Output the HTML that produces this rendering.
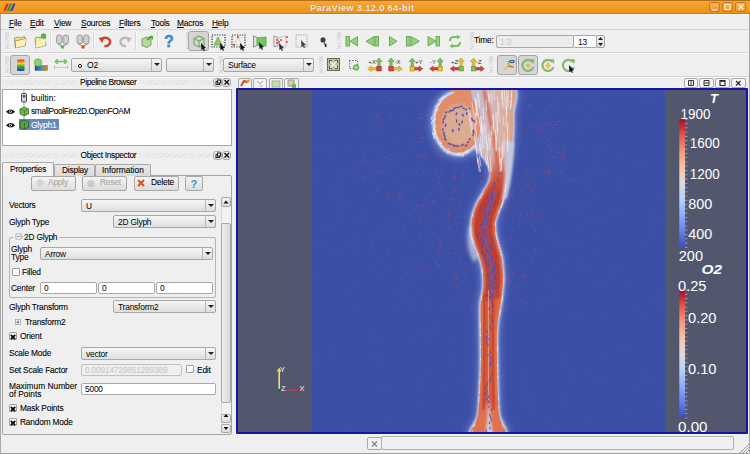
<!DOCTYPE html>
<html><head><meta charset="utf-8">
<style>
*{box-sizing:border-box;margin:0;padding:0}
html,body{width:750px;height:454px;overflow:hidden;background:#efefef;font-family:"Liberation Sans",sans-serif;font-size:8px;color:#000}
.t{-webkit-text-stroke:0.08px currentColor}
.a{position:absolute}
.t{position:absolute;white-space:nowrap;line-height:9px;font-size:8.4px;letter-spacing:-0.2px}
#title{left:0;top:0;width:750px;height:14px;background:linear-gradient(#f6a73a,#f29a24 60%,#ee921c);border-top:1px solid #b86e18;border-bottom:1px solid #c97a1c}
.tb{position:absolute;top:2px;width:11px;height:10px;border:1px solid #c8781c;border-radius:2px;background:linear-gradient(#f8b458,#f09a2a)}
.hline{position:absolute;left:1px;width:748px;height:1px;background:#d4d4d4}
.wline{position:absolute;left:1px;width:748px;height:1px;background:#fafafa}
.combo{position:absolute;height:13px;border:1px solid #a8a8a8;border-radius:2px;background:linear-gradient(#f6f6f6,#dedede)}
.combo .arr{position:absolute;right:0;top:0;bottom:0;width:10px;border-left:1px solid #b4b4b4}
.combo .arr:after{content:"";position:absolute;left:2px;top:4px;border-left:3px solid transparent;border-right:3px solid transparent;border-top:3px solid #222}
.combo .v{position:absolute;left:4px;top:1px;line-height:10px;font-size:8.4px;letter-spacing:-0.2px}
.field{position:absolute;height:12px;border:1px solid #a8a8a8;border-radius:2px;background:#fff}
.field .v{position:absolute;left:3px;top:0px;line-height:10px;font-size:8.4px;letter-spacing:-0.2px}
.btn{position:absolute;border:1px solid #a8a8a8;border-radius:2px;background:linear-gradient(#f4f4f4,#dcdcdc)}
.hdr{position:absolute;height:5px;background:repeating-linear-gradient(135deg,#e0e0e0 0 1px,transparent 1px 2.5px)}
.cb{position:absolute;width:8px;height:8px;border:1px solid #a0a0a0;border-radius:1px;background:#f8f8f8}
.x:before,.x:after{content:"";position:absolute;left:0px;top:2.6px;width:6px;height:1.8px;background:#111;transform:rotate(45deg)}.x:after{transform:rotate(-45deg)}
.hdl{position:absolute;width:4px;background:repeating-linear-gradient(135deg,#d4d4d4 0 1px,transparent 1px 2px)}
.sep{position:absolute;width:1px;height:18px;background:#d8d8d8;box-shadow:1px 0 #fafafa}
.prs{position:absolute;border:1px solid #a4a4a4;border-radius:3px;background:#d6d6d6}
.leg{position:absolute;color:#fff;font-size:13.5px;line-height:14px;white-space:nowrap}
</style></head><body>

<!-- window frame -->
<div class="a" style="left:0;top:0;width:750px;height:454px;border:1px solid #a8a8a8;border-top:none"></div>

<!-- title bar -->
<div id="title" class="a"></div>
<div class="t" style="left:310px;top:2.5px;font-weight:bold;font-size:9.4px;color:#f6ead2;letter-spacing:0.3px;text-shadow:0 0 1px rgba(140,70,0,.6)">ParaView 3.12.0 64-bit</div>
<div class="tb" style="left:709px"></div>
<div class="tb" style="left:722px"></div>
<div class="tb" style="left:735px"></div>

<!-- menu bar -->
<div class="wline" style="top:14px"></div>
<div class="hline" style="top:29px"></div>
<div class="t" style="left:9px;top:19px"><u style="text-decoration-thickness:1px;text-underline-offset:1px">F</u>ile</div>
<div class="t" style="left:30px;top:19px"><u style="text-decoration-thickness:1px;text-underline-offset:1px">E</u>dit</div>
<div class="t" style="left:54px;top:19px"><u style="text-decoration-thickness:1px;text-underline-offset:1px">V</u>iew</div>
<div class="t" style="left:81px;top:19px"><u style="text-decoration-thickness:1px;text-underline-offset:1px">S</u>ources</div>
<div class="t" style="left:119px;top:19px"><u style="text-decoration-thickness:1px;text-underline-offset:1px">F</u>ilters</div>
<div class="t" style="left:151px;top:19px"><u style="text-decoration-thickness:1px;text-underline-offset:1px">T</u>ools</div>
<div class="t" style="left:177px;top:19px"><u style="text-decoration-thickness:1px;text-underline-offset:1px">M</u>acros</div>
<div class="t" style="left:212px;top:19px"><u style="text-decoration-thickness:1px;text-underline-offset:1px">H</u>elp</div>

<!-- toolbar 1 -->
<div class="hline" style="top:52px"></div>
<div class="wline" style="top:53px"></div>
<div class="hline" style="top:76px"></div>
<div class="wline" style="top:77px"></div>


<!-- toolbar handles -->
<div class="hdl" style="left:5px;top:32px;height:17px"></div>
<div class="hdl" style="left:186px;top:32px;height:17px"></div>
<div class="hdl" style="left:337px;top:32px;height:17px"></div>
<div class="hdl" style="left:470px;top:32px;height:17px"></div>
<div class="hdl" style="left:5px;top:56px;height:17px"></div>
<div class="hdl" style="left:219px;top:56px;height:17px"></div>
<div class="hdl" style="left:319px;top:56px;height:17px"></div>
<div class="hdl" style="left:489px;top:56px;height:17px"></div>
<div class="sep" style="left:50px;top:32px"></div>
<div class="sep" style="left:93px;top:32px"></div>
<div class="sep" style="left:135px;top:32px"></div>
<div class="sep" style="left:157px;top:32px"></div>
<!-- pressed buttons -->
<div class="prs" style="left:188px;top:31px;width:21px;height:20px"></div>
<div class="prs" style="left:10px;top:55px;width:20px;height:20px"></div>
<div class="prs" style="left:497px;top:55px;width:20px;height:20px"></div>
<div class="prs" style="left:518px;top:55px;width:20px;height:20px"></div>

<!-- toolbar1 icons -->
<svg class="a" style="left:0;top:28px" width="750" height="24" viewBox="0 28 750 24">
 <!-- folders -->
 <g stroke="#8a8a60" stroke-width="0.8" fill="#f4e39a">
  <path d="M14.5 38 l4 -1 l1 1 l5 -1.5 l1 9 l-10 2.5z"/>
  <path d="M15 41 l11 -2.5 l-1 7 l-9.5 2.2z" fill="#f8ec b0"/>
  <path d="M35 38 l4 -1 l1 1 l5 -1.5 l1 9 l-10 2.5z"/>
 </g>
 <path d="M16 41.5 l10 -2.5 l-1 6.5 l-9 2.2z" fill="#fbf0b8"/>
 <path d="M36 41.5 l10 -2.5 l-1 6.5 l-9 2.2z" fill="#fbf0b8"/>
 <circle cx="43.5" cy="36" r="2.3" fill="#58c040" stroke="#2e8a28" stroke-width="0.6"/>
 <!-- servers -->
 <g fill="#cfcfcf" stroke="#8c8c8c" stroke-width="0.8">
  <rect x="56.5" y="35" width="5.5" height="9" rx="2.5"/><rect x="63" y="35" width="5.5" height="9" rx="2.5"/>
  <rect x="77" y="35" width="5.5" height="9" rx="2.5"/><rect x="83.5" y="35" width="5.5" height="9" rx="2.5"/>
 </g>
 <path d="M58 44 l4 2 M67 44 l-4 2 M78.5 44 l4 2 M87.5 44 l-4 2" stroke="#888" stroke-width="1"/>
 <circle cx="62.5" cy="47" r="1.8" fill="#50c040"/>
 <circle cx="83" cy="47" r="1.8" fill="#e04a20"/>
 <!-- undo / redo -->
 <path d="M101.5 40 a4.5 4.2 0 1 1 3 6" fill="none" stroke="#d83a22" stroke-width="2.4"/>
 <path d="M98.5 38 l5.5 -1 l-1.5 6z" fill="#d83a22"/>
 <path d="M129 40 a4.5 4.2 0 1 0 -3 6" fill="none" stroke="#b8b8b8" stroke-width="2.4"/>
 <path d="M132 38 l-5.5 -1 l1.5 6z" fill="#b8b8b8"/>
 <!-- green macro icon -->
 <path d="M142 39 l5 -2 l4 2 v6 l-4 2.5 l-5 -2z" fill="#b8d8a0" stroke="#6a9a50" stroke-width="0.9"/>
 <path d="M147 40 l5 -4" stroke="#48b030" stroke-width="2"/>
 <path d="M149 36 h4 v4z" fill="#48b030"/>
 <!-- help -->
 <text x="164" y="47" font-family="Liberation Sans" font-weight="bold" font-size="16" fill="#3a90d4" stroke="#2a6aa8" stroke-width="0.3">?</text>
 <!-- select cube (in pressed btn) -->
 <path d="M194 38.5 l5 -2.5 l5 2.5 v6 l-5 2.5 l-5 -2.5z M194 38.5 l5 2.5 l5 -2.5 M199 41 v6" fill="none" stroke="#7aa860" stroke-width="1.2"/>
 <path d="M201 43 l5 5 l-2 0.5 l1 2 l-1 .5 l-1 -2 l-1.5 1.2z" fill="#111"/>
 <!-- dotted select tri -->
 <rect x="212" y="35" width="13" height="12" fill="none" stroke="#333" stroke-width="1.2" stroke-dasharray="1.2 1.3"/>
 <path d="M214 45 l4 -8 l4 8z" fill="#8ccc6a" stroke="#5a9a40" stroke-width="0.7"/>
 <path d="M220 43 l5 5 l-2 0.5 l1 2 l-1 .5 l-1 -2 l-1.5 1.2z" fill="#111"/>
 <rect x="232" y="35" width="13" height="12" fill="none" stroke="#333" stroke-width="1.2" stroke-dasharray="1.2 1.3"/>
 <path d="M234 45 l4 -8 l4 8z" fill="none" stroke="#e0b8b0" stroke-width="0.7"/>
 <circle cx="238" cy="37" r="1" fill="#e02020"/><circle cx="234" cy="45" r="1" fill="#e02020"/>
 <path d="M240 43 l5 5 l-2 0.5 l1 2 l-1 .5 l-1 -2 l-1.5 1.2z" fill="#111"/>
 <!-- frustums -->
 <path d="M253.5 36 l4 1.5 v8 l-4 1.5z" fill="#d8e8d0" stroke="#777" stroke-width="0.8"/>
 <path d="M257 38 l9 -1 v9 l-9 -1z" fill="#70c860" stroke="#50a040" stroke-width="0.8"/>
 <path d="M259 42 l5 5 l-2 0.5 l1 2 l-1 .5 l-1 -2 l-1.5 1.2z" fill="#222"/>
 <path d="M274 36 l4 1.5 v8 l-4 1.5z" fill="#eee" stroke="#888" stroke-width="0.8"/>
 <path d="M278 38 l8 -2 v11 l-8 -2z" fill="#eee" stroke="#aaa" stroke-width="0.6"/>
 <g fill="#e03020"><circle cx="277" cy="40" r="0.9"/><circle cx="279" cy="42" r="0.9"/><circle cx="277" cy="43" r="0.9"/><circle cx="287" cy="37" r="0.9"/><circle cx="287" cy="42" r="0.9"/><circle cx="281" cy="40" r="0.9"/></g>
 <path d="M279 43 l5 5 l-2 0.5 l1 2 l-1 .5 l-1 -2 l-1.5 1.2z" fill="#333"/>
 <rect x="296" y="35" width="11" height="12" fill="none" stroke="#999" stroke-width="1" stroke-dasharray="1.2 1.2"/>
 <path d="M301 40 l5 5 l-2 0.5 l1 2 l-1 .5 l-1 -2 l-1.5 1.2z" fill="#444"/>
 <!-- star cursor -->
 <path d="M323 37 v6 M320 40 h6 M321 38 l4 4 M325 38 l-4 4" stroke="#333" stroke-width="1.1"/>
 <path d="M324 42 l3 3 l-1 1 l1 1 h-2z" fill="#222"/>
 <!-- VCR -->
 <g fill="#90d47a" stroke="#5e9e48" stroke-width="0.8">
  <rect x="346" y="36.5" width="3.5" height="9.5"/><path d="M357.5 36.5 v9.5 l-7.5 -4.75z"/>
  <path d="M366 41.25 l8 -4.75 v9.5z"/><rect x="375" y="36.5" width="3.5" height="9.5"/>
  <path d="M389.5 36.5 l7.5 4.75 l-7.5 4.75z"/>
  <rect x="406.5" y="36.5" width="3.5" height="9.5"/><path d="M411 36.5 l8.5 4.75 l-8.5 4.75z"/>
  <path d="M428 36.5 l8 4.75 l-8 4.75z"/><rect x="436" y="36.5" width="3.5" height="9.5"/>
 </g>
 <!-- loop -->
 <path d="M450 41 q0 -4 4 -4 h4" fill="none" stroke="#78c060" stroke-width="2.2"/>
 <path d="M457 34.5 l3.5 2.5 l-3.5 2.5z" fill="#78c060"/>
 <path d="M460 42 q0 4 -4 4 h-4" fill="none" stroke="#78c060" stroke-width="2.2"/>
 <path d="M453 43.5 l-3.5 2.5 l3.5 2.5z" fill="#78c060"/>
</svg>
<div class="t" style="left:474px;top:36px">Time:</div>
<div class="field" style="left:496px;top:35px;width:78px;height:13px;background:#ececec"><div class="v" style="color:#c8c8c8;top:1px">1 3</div></div>
<div class="field" style="left:573px;top:35px;width:24px;height:13px"><div class="v" style="top:1px;left:4px">13</div></div>
<div class="btn" style="left:596px;top:35px;width:9px;height:13px"></div>
<svg class="a" style="left:596px;top:35px" width="9" height="13"><path d="M2 5 l2.5 -3 l2.5 3z M2 8 l2.5 3 l2.5 -3z" fill="#222"/></svg>

<!-- toolbar2 icons -->
<svg class="a" style="left:0;top:52px" width="750" height="25" viewBox="0 52 750 25">
 <defs>
  <linearGradient id="rb" x1="0" y1="0" x2="0" y2="1"><stop offset="0" stop-color="#e83020"/><stop offset=".35" stop-color="#f0d020"/><stop offset=".6" stop-color="#30b030"/><stop offset="1" stop-color="#2040c0"/></linearGradient>
  <linearGradient id="bo" x1="0" y1="0" x2="1" y2="0"><stop offset="0" stop-color="#2040c0"/><stop offset=".5" stop-color="#30a0a0"/><stop offset="1" stop-color="#f08020"/></linearGradient>
 </defs>
 <rect x="17" y="59.5" width="7.5" height="11.5" rx="1" fill="url(#rb)"/>
 <rect x="35" y="65.5" width="12.5" height="5" fill="url(#bo)" stroke="#555" stroke-width="0.4"/>
 <circle cx="38" cy="62.5" r="3.8" fill="#90d070" stroke="#5a9a40" stroke-width="0.6"/>
 <path d="M55 61.5 h12 M55 61.5 l3 -2.2 M55 61.5 l3 2.2 M67 61.5 l-3 -2.2 M67 61.5 l-3 2.2" stroke="#80c060" stroke-width="1.6" fill="none"/>
 <path d="M54.5 67.5 h13 M54.5 65.5 v4 M67.5 65.5 v4" stroke="#888" stroke-width="0.7" stroke-dasharray="1 1" fill="none"/>
 <!-- reset camera -->
 <rect x="327.5" y="58.5" width="12" height="12" fill="#b8c0a0" stroke="#666" stroke-width="1"/>
 <path d="M329.5 60.5 l8 8 M337.5 60.5 l-8 8" stroke="#f4f4f0" stroke-width="1.3"/>
 <path d="M329 60 h3 v1 h-2 v2 h-1z M338 60 h-3 v1 h2 v2 h1z M329 69 h3 v-1 h-2 v-2 h-1z M338 69 h-3 v-1 h2 v-2 h1z" fill="#4a6a30"/>
 <!-- select center -->
 <path d="M349.5 60.5 h8 v8 h-8z" fill="none" stroke="#555" stroke-width="1" stroke-dasharray="1.2 1.6"/>
 <circle cx="356" cy="67.5" r="2.8" fill="#70d060" stroke="#40a030" stroke-width="0.6"/>
 <circle cx="356" cy="67.5" r="0.8" fill="#fff"/>
</svg>

<svg class="a" style="left:0;top:52px" width="750" height="25" viewBox="0 52 750 25"><path d="M377.8 67 v-5.5 h-1.8 l3 -3.5 l3 3.5 h-1.8 v5.5z" fill="#80c060" stroke="#4a8a38" stroke-width="0.5"/><path d="M367.7 68.7 l3.5 -2.8 v1.6 h5.800000000000011 v2.4 h-5.800000000000011 v1.6z" fill="#f0c030" stroke="#a08020" stroke-width="0.5"/><rect x="376.8" y="66.5" width="4.5" height="4.5" fill="#e04030" stroke="#902820" stroke-width="0.5"/><text x="368.5" y="64.3" font-family="Liberation Sans" font-size="6" fill="#333">+X</text><path d="M389.8 67 v-5.5 h-1.8 l3 -3.5 l3 3.5 h-1.8 v5.5z" fill="#80c060" stroke="#4a8a38" stroke-width="0.5"/><path d="M402.3 68.7 l-3.5 -2.8 v1.6 h-5.800000000000011 v2.4 h5.800000000000011 v1.6z" fill="#f0c030" stroke="#a08020" stroke-width="0.5"/><rect x="388.8" y="66.5" width="4.5" height="4.5" fill="#e04030" stroke="#902820" stroke-width="0.5"/><text x="394.5" y="64.3" font-family="Liberation Sans" font-size="6" fill="#333">-X</text><path d="M411.0 67 v-5.5 h-1.8 l3 -3.5 l3 3.5 h-1.8 v5.5z" fill="#80c060" stroke="#4a8a38" stroke-width="0.5"/><path d="M422.7 68.7 l-3.5 -2.8 v1.6 h-5.199999999999989 v2.4 h5.199999999999989 v1.6z" fill="#e04030" stroke="#902820" stroke-width="0.5"/><rect x="410" y="66.5" width="4.5" height="4.5" fill="#f0c030" stroke="#a08020" stroke-width="0.5"/><text x="415" y="64.3" font-family="Liberation Sans" font-size="6" fill="#333">+Y</text><path d="M439.0 67 v-5.5 h-1.8 l3 -3.5 l3 3.5 h-1.8 v5.5z" fill="#80c060" stroke="#4a8a38" stroke-width="0.5"/><path d="M429.7 68.7 l3.5 -2.8 v1.6 h5.0 v2.4 h-5.0 v1.6z" fill="#e04030" stroke="#902820" stroke-width="0.5"/><rect x="438" y="66.5" width="4.5" height="4.5" fill="#f0c030" stroke="#a08020" stroke-width="0.5"/><text x="430" y="64.3" font-family="Liberation Sans" font-size="6" fill="#333">-Y</text><path d="M460.0 67 v-5.5 h-1.8 l3 -3.5 l3 3.5 h-1.8 v5.5z" fill="#f0c030" stroke="#a08020" stroke-width="0.5"/><path d="M450.3 68.7 l3.5 -2.8 v1.6 h5.399999999999977 v2.4 h-5.399999999999977 v1.6z" fill="#e04030" stroke="#902820" stroke-width="0.5"/><rect x="459" y="66.5" width="4.5" height="4.5" fill="#80c060" stroke="#4a8a38" stroke-width="0.5"/><text x="451" y="64.3" font-family="Liberation Sans" font-size="6" fill="#333">+Z</text><path d="M472.3 67 v-5.5 h-1.8 l3 -3.5 l3 3.5 h-1.8 v5.5z" fill="#f0c030" stroke="#a08020" stroke-width="0.5"/><path d="M484.3 68.7 l-3.5 -2.8 v1.6 h-5.300000000000011 v2.4 h5.300000000000011 v1.6z" fill="#e04030" stroke="#902820" stroke-width="0.5"/><rect x="471.3" y="66.5" width="4.5" height="4.5" fill="#80c060" stroke="#4a8a38" stroke-width="0.5"/><text x="476" y="64.3" font-family="Liberation Sans" font-size="6" fill="#333">-Z</text>
 <path d="M508 62 l3 -2 l3 2" fill="none" stroke="#444" stroke-width="0"/>
 <path d="M503.5 70 l5 -4" stroke="#f0c030" stroke-width="1.6"/>
 <path d="M508.5 66 l5 1" stroke="#e06030" stroke-width="1.6"/>
 <path d="M508.5 66 v-5" stroke="#80c060" stroke-width="1.6"/>
 <ellipse cx="512" cy="61.5" rx="2.8" ry="1.8" fill="#3a5aa0"/><circle cx="512" cy="61.5" r="0.8" fill="#fff"/>
<path d="M532.5 62.0 A5.6 5.6 0 1 0 533.4 67.0" fill="none" stroke="#88b870" stroke-width="2.2"/><path d="M530 59.0 l4.5 0.5 l-0.8 4.5z" fill="#88b870"/><circle cx="528" cy="65.5" r="1.6" fill="#e8d040" stroke="#a09020" stroke-width="0.4"/><path d="M552.5 62.0 A5.6 5.6 0 1 0 553.4 67.0" fill="none" stroke="#88b870" stroke-width="2.2"/><path d="M550 59.0 l4.5 0.5 l-0.8 4.5z" fill="#88b870"/><path d="M548 62.5 l2.5 3 l-2.5 3 l-2.5 -3z" fill="#f0d040" stroke="#c08020" stroke-width="0.4"/><path d="M573.0 62.0 A5.6 5.6 0 1 0 573.9 67.0" fill="none" stroke="#88b870" stroke-width="2.2"/><path d="M570.5 59.0 l4.5 0.5 l-0.8 4.5z" fill="#88b870"/><path d="M569 65 l5 5 l-2 0.5 l1 2 l-1 .5 l-1 -2 l-1.5 1.2z" fill="#111"/></svg>

<div class="combo" style="left:71px;top:58px;width:91px;height:14px"><div class="v" style="left:15px;top:1px;font-size:8.5px">O2</div><div class="arr"></div></div>
<svg class="a" style="left:77px;top:63px" width="6" height="6"><circle cx="3" cy="3" r="1.6" fill="none" stroke="#222" stroke-width="1"/></svg>
<div class="combo" style="left:166px;top:58px;width:48px;height:14px"><div class="arr"></div></div>
<div class="combo" style="left:223px;top:58px;width:91px;height:14px"><div class="v" style="top:1px;font-size:8.5px">Surface</div><div class="arr"></div></div>

<!-- docks -->
<div class="t" style="left:80px;top:78px;letter-spacing:-0.40px">Pipeline Browser</div>
<div class="a" style="left:2px;top:89px;width:230px;height:57px;background:#fff;border:1px solid #a8a8a8"></div>
<div class="t" style="left:31px;top:94px;letter-spacing:0.10px">builtin:</div>
<div class="t" style="left:31px;top:107px;letter-spacing:-0.39px">smallPoolFire2D.OpenFOAM</div>
<div class="a" style="left:19px;top:119px;width:40px;height:11px;background:#6288bf"></div>
<div class="t" style="left:31px;top:121px;color:#fff">Glyph1</div>

<div class="t" style="left:80.5px;top:151px;letter-spacing:-0.33px">Object Inspector</div>


<!-- object inspector -->
<div class="a" style="left:2px;top:175px;width:230px;height:260px;border:1px solid #a4a4a4;border-radius:2px;background:#efefef"></div>
<!-- tabs -->
<div class="a" style="left:54px;top:164px;width:41px;height:12px;border:1px solid #a8a8a8;border-bottom:none;border-radius:2px 2px 0 0;background:linear-gradient(#e8e8e8,#dadada)"></div>
<div class="a" style="left:95px;top:164px;width:56px;height:12px;border:1px solid #a8a8a8;border-bottom:none;border-radius:2px 2px 0 0;background:linear-gradient(#e8e8e8,#dadada)"></div>
<div class="a" style="left:2px;top:162px;width:52px;height:14px;border:1px solid #a8a8a8;border-bottom:none;border-radius:2px 2px 0 0;background:#f2f2f2"></div>
<div class="t" style="left:10px;top:165px">Properties</div>
<div class="t" style="left:62px;top:166px">Display</div>
<div class="t" style="left:102px;top:166px;letter-spacing:0.00px">Information</div>
<!-- buttons -->
<div class="btn" style="left:31px;top:176px;width:45px;height:15px"></div>
<div class="t" style="left:48px;top:178px;color:#a8a8a8">Apply</div>
<div class="btn" style="left:82px;top:176px;width:45px;height:15px"></div>
<div class="t" style="left:100px;top:178px;color:#a8a8a8">Reset</div>
<div class="btn" style="left:134px;top:176px;width:45px;height:15px"></div>
<div class="t" style="left:151px;top:178px">Delete</div>
<div class="btn" style="left:185px;top:176px;width:18px;height:15px"></div>
<!-- rows -->
<div class="t" style="left:9px;top:201px">Vectors</div>
<div class="combo" style="left:81px;top:199px;width:135px"><div class="v">U</div><div class="arr"></div></div>
<div class="t" style="left:9px;top:218px">Glyph Type</div>
<div class="combo" style="left:113px;top:215px;width:103px"><div class="v">2D Glyph</div><div class="arr"></div></div>
<!-- group -->
<div class="a" style="left:9px;top:237px;width:207px;height:61px;border:1px solid #b4b4b4;border-radius:2px"></div>
<div class="a" style="left:13px;top:232px;width:46px;height:10px;background:#efefef"></div>
<div class="t" style="left:24px;top:233px">2D Glyph</div>
<div class="t" style="left:11px;top:245px;line-height:8px">Glyph<br>Type</div>
<div class="combo" style="left:40px;top:247px;width:173px"><div class="v">Arrow</div><div class="arr"></div></div>
<div class="cb" style="left:12px;top:268px"></div>
<div class="t" style="left:22px;top:268px">Filled</div>
<div class="t" style="left:11px;top:284px">Center</div>
<div class="field" style="left:40px;top:282px;width:57px"><div class="v">0</div></div>
<div class="field" style="left:98px;top:282px;width:57px"><div class="v">0</div></div>
<div class="field" style="left:156px;top:282px;width:57px"><div class="v">0</div></div>
<div class="t" style="left:9px;top:303px">Glyph Transform</div>
<div class="combo" style="left:113px;top:300px;width:103px"><div class="v">Transform2</div><div class="arr"></div></div>
<div class="t" style="left:25px;top:318px">Transform2</div>
<div class="cb x" style="left:9px;top:332px"></div>
<div class="t" style="left:20px;top:332px">Orient</div>
<div class="t" style="left:9px;top:349px">Scale Mode</div>
<div class="combo" style="left:81px;top:347px;width:135px"><div class="v">vector</div><div class="arr"></div></div>
<div class="t" style="left:9px;top:366px">Set Scale Factor</div>
<div class="field" style="left:81px;top:364px;width:101px;background:#efefef;border-color:#c0c0c0"><div class="v" style="color:#c4c4c4">0.00914729851289389</div></div>
<div class="cb" style="left:186px;top:365px"></div>
<div class="t" style="left:197px;top:366px">Edit</div>
<div class="t" style="left:9px;top:382px;line-height:8px;letter-spacing:-0.02px">Maximum Number<br>of Points</div>
<div class="field" style="left:81px;top:383px;width:135px"><div class="v">5000</div></div>
<div class="cb x" style="left:9px;top:404px"></div>
<div class="t" style="left:20px;top:404px">Mask Points</div>
<div class="cb x" style="left:9px;top:418px"></div>
<div class="t" style="left:20px;top:418px">Random Mode</div>
<!-- scrollbar -->
<div class="a" style="left:221px;top:197px;width:10px;height:236px;background:#f2f2f2;border-left:1px solid #d8d8d8"></div>
<div class="btn" style="left:221px;top:197px;width:10px;height:10px"></div>
<div class="btn" style="left:221px;top:223px;width:10px;height:180px;background:linear-gradient(90deg,#f0f0f0,#d8d8d8)"></div>
<div class="btn" style="left:221px;top:414px;width:10px;height:9px"></div>
<div class="btn" style="left:221px;top:424px;width:10px;height:9px"></div>
<svg class="a" style="left:221px;top:197px" width="10" height="236"><path d="M2.5 6.5 l2.5 -3 l2.5 3z M2.5 220 l2.5 -3 l2.5 3z M2.5 230 l2.5 3 l2.5 -3z" fill="#111"/></svg>

<!-- title icon and buttons -->
<svg class="a" style="left:0;top:0" width="750" height="16">
 <path d="M3.5 11 l3.2 -7.5 h2.2 l-3.2 7.5z" fill="#e02818"/>
 <path d="M6.8 11 l3.2 -7.5 h2.2 l-3.2 7.5z" fill="#20a030"/>
 <path d="M10.1 11 l3.2 -7.5 h2.2 l-3.2 7.5z" fill="#2040d0"/>
 <path d="M712 10 h5" stroke="#fff4e0" stroke-width="1.2"/>
 <rect x="725" y="4.5" width="5" height="5" fill="none" stroke="#fff4e0" stroke-width="1"/>
 <path d="M738.5 4.5 l5 5 M743.5 4.5 l-5 5" stroke="#fff4e0" stroke-width="1.3"/>
</svg>
<!-- dock headers hatch -->
<div class="hdr" style="left:3px;top:80px;width:74px"></div>
<div class="hdr" style="left:141px;top:80px;width:71px"></div>
<div class="hdr" style="left:3px;top:153px;width:74px"></div>
<div class="hdr" style="left:139px;top:153px;width:73px"></div>
<div class="btn" style="left:213px;top:78px;width:9px;height:9px;border-radius:3px"></div>
<div class="btn" style="left:222px;top:78px;width:9px;height:9px;border-radius:3px"></div>
<div class="btn" style="left:213px;top:151px;width:9px;height:9px;border-radius:3px"></div>
<div class="btn" style="left:222px;top:151px;width:9px;height:9px;border-radius:3px"></div>
<svg class="a" style="left:0;top:0" width="240" height="440">
 <g fill="none" stroke="#222" stroke-width="1">
  <rect x="216" y="81.5" width="3.5" height="3"/><rect x="217.5" y="80" width="3" height="3" fill="#eee"/>
  <rect x="216" y="154.5" width="3.5" height="3"/><rect x="217.5" y="153" width="3" height="3" fill="#eee"/>
 </g>
 <path d="M224.5 80 l4.5 4.5 M229 80 l-4.5 4.5 M224.5 153 l4.5 4.5 M229 153 l-4.5 4.5" stroke="#111" stroke-width="1.4"/>
 <!-- pipeline icons -->
 <path d="M24 89.5 v4 M24 102 v5.5 M24 115 v4.5" stroke="#888" stroke-width="0.8"/>
 <rect x="21.5" y="93.5" width="5" height="8.5" rx="1" fill="#d8d8d8" stroke="#333" stroke-width="0.9"/>
 <rect x="22.8" y="95" width="2.5" height="2.5" fill="#555"/>
 <path d="M20 109 l4 -1.8 l4.5 1.8 v5 l-4.5 1.8 l-4 -1.8z" fill="#6cb84a" stroke="#3a6a28" stroke-width="0.8"/>
 <path d="M20 109 l4.5 1.8 l4 -1.8 M24.5 110.8 v5" stroke="#3a6a28" stroke-width="0.6" fill="none"/>
 <path d="M20 121.5 l4 -1.5 l4.5 1.5 v6 l-4.5 1.5 l-4 -1.5z" fill="#5aa040" stroke="#2e5a22" stroke-width="0.8"/>
 <path d="M24.5 123 v6" stroke="#2e5a22" stroke-width="0.7"/>
 <g fill="#111"><path d="M6 111.8 q4.5 -4.5 9 0 q-4.5 4.5 -9 0z"/><path d="M6 125.3 q4.5 -4.5 9 0 q-4.5 4.5 -9 0z"/></g>
 <circle cx="10.5" cy="111.8" r="1.3" fill="#fff"/><circle cx="10.5" cy="125.3" r="1.3" fill="#fff"/>
 <circle cx="10.5" cy="111.8" r="0.7" fill="#111"/><circle cx="10.5" cy="125.3" r="0.7" fill="#111"/>
 <!-- object inspector button icons -->
 <g opacity="0.45">
  <circle cx="40" cy="182.5" r="3.5" fill="#bbb"/>
  <circle cx="91" cy="183.5" r="3.8" fill="#aaa"/>
 </g>
 <path d="M138 180 l6 6 M144 180 l-6 6" stroke="#e05020" stroke-width="2"/>
 <text x="190.5" y="188" font-family="Liberation Sans" font-weight="bold" font-size="11" fill="#3a8ed0">?</text>
 <!-- group title box minus, transform plus -->
 <rect x="16" y="234" width="5" height="5" fill="#fff" stroke="#999" stroke-width="0.7"/>
 <path d="M17.2 236.5 h2.6" stroke="#555" stroke-width="0.7"/>
 <path d="M21 236.5 h2" stroke="#999" stroke-width="0.7"/>
 <rect x="15.5" y="319.5" width="5" height="5" fill="#fff" stroke="#999" stroke-width="0.7"/>
 <path d="M16.5 322 h3 M18 320.5 v3" stroke="#444" stroke-width="0.8"/>
</svg>
<!-- render view tabs -->
<div class="btn" style="left:238px;top:78px;width:14px;height:11px;border-radius:2px 2px 0 0;background:#f2f2f2"></div>
<div class="btn" style="left:253px;top:78px;width:14px;height:11px;border-radius:2px 2px 0 0;background:#f2f2f2"></div>
<div class="btn" style="left:269px;top:78px;width:14px;height:11px;border-radius:2px 2px 0 0;background:#f2f2f2"></div>
<div class="btn" style="left:284px;top:78px;width:15px;height:11px;border-radius:2px 2px 0 0;background:#f2f2f2"></div>
<div class="btn" style="left:684px;top:78px;width:14px;height:10px;background:#f6f6f6"></div>
<div class="btn" style="left:699px;top:78px;width:15px;height:10px;background:#f6f6f6"></div>
<div class="btn" style="left:715px;top:78px;width:15px;height:10px;background:#f6f6f6"></div>
<div class="btn" style="left:731px;top:78px;width:15px;height:10px;background:#f6f6f6"></div>
<svg class="a" style="left:230px;top:74px" width="520" height="16" viewBox="230 74 520 16">
 <path d="M241 86 l3 -5 l3 1 l2 -2" stroke="#d05020" stroke-width="2" fill="none"/><circle cx="248" cy="81" r="1.6" fill="#e8a040"/>
 <path d="M257 81 l3 3 l3 -3 M259 86 h4" stroke="#bbb" stroke-width="1.2" fill="none"/>
 <rect x="272" y="81" width="8" height="6" fill="#c8e0a8" stroke="#90a880" stroke-width="0.8"/>
 <rect x="288" y="80" width="6" height="6" fill="#d8d0b0" stroke="#889" stroke-width="0.8"/><circle cx="294" cy="86" r="2.3" fill="#60c040"/>
 <path d="M688.5 80.5 h5 v5 h-5z M691 80.5 v5" stroke="#222" stroke-width="0.9" fill="none"/>
 <path d="M704 80.5 h5 v5 h-5z M704 83 h5" stroke="#222" stroke-width="0.9" fill="none"/>
 <path d="M720 80.5 h5 v5 h-5z" stroke="#222" stroke-width="1.1" fill="none"/><path d="M720 81 h5" stroke="#222" stroke-width="1.5"/>
 <path d="M736 81 l4.5 4.5 M740.5 81 l-4.5 4.5" stroke="#222" stroke-width="1.1"/>
</svg>

<!-- render view -->
<div class="a" style="left:236px;top:88px;width:512px;height:346px;border:2px solid #1616a4;border-radius:1px;background:#52576e"></div>
<svg class="a" style="left:238px;top:90px" width="508" height="342" viewBox="238 90 508 342">
<defs>
<filter id="b4" x="-50%" y="-50%" width="200%" height="200%"><feGaussianBlur stdDeviation="3.5"/></filter>
<filter id="b2" x="-50%" y="-50%" width="200%" height="200%"><feGaussianBlur stdDeviation="2"/></filter>
<filter id="b1" x="-50%" y="-50%" width="200%" height="200%"><feGaussianBlur stdDeviation="1"/></filter>
<filter id="b06" x="-50%" y="-50%" width="200%" height="200%"><feGaussianBlur stdDeviation="0.6"/></filter>
<filter id="b04" x="-50%" y="-50%" width="200%" height="200%"><feGaussianBlur stdDeviation="0.35"/></filter>
<linearGradient id="plg" x1="0" y1="0" x2="1" y2="0"><stop offset="0" stop-color="#b4bcdc"/><stop offset=".45" stop-color="#ccbcc8"/><stop offset=".8" stop-color="#dcae9c"/><stop offset="1" stop-color="#d8a088"/></linearGradient>
</defs>
<rect x="238" y="90" width="508" height="342" fill="#52576e"/>
<rect x="312" y="90" width="353" height="342" fill="#3c4fa6"/>
<path d="M424.0 169.6l-0.9 3.2M408.2 121.5l-2.7 -1.9M355.2 175.3l-2.0 2.7M538.7 131.4l2.3 -0.6M583.7 203.2l2.0 0.2M517.4 174.1l2.2 1.6M424.5 138.0l-3.5 -0.4M373.0 244.3l-0.9 2.5M532.4 258.9l0.1 3.8M513.1 196.5l1.9 0.9M396.9 139.6l-2.7 0.1M593.2 150.4l1.8 1.1M424.7 156.7l-2.0 0.2M426.4 212.1l0.0 3.3M445.1 231.7l0.4 2.2M567.6 179.7l1.6 2.1M553.1 98.0l3.6 -0.3M380.0 115.8l-2.6 1.3M477.0 266.2l-0.1 1.8M382.1 147.8l-2.4 2.7M533.7 228.7l2.0 3.2M512.8 272.2l-1.0 2.9M403.6 227.7l-0.5 2.5M524.7 130.9l2.2 0.1M532.1 213.4l1.1 2.7M534.3 218.1l2.0 1.4M462.1 179.2l0.0 3.1M412.7 140.3l-2.5 -0.0M441.6 214.8l-0.4 2.2M580.9 225.3l0.8 3.0M385.3 235.6l-1.8 0.7M421.6 130.8l-2.1 -0.5M378.4 165.5l-3.0 0.5M392.2 154.5l-2.4 2.3M481.3 180.0l-0.7 2.4M543.5 172.3l2.2 1.3M368.9 145.0l-3.1 1.6M407.0 272.7l-1.2 1.3M422.5 117.7l-3.2 -0.4M445.2 274.4l0.1 2.6M546.7 178.7l1.6 1.9M345.4 168.6l-1.8 1.9M541.1 127.9l3.4 0.2M437.0 261.1l-1.8 3.3M383.1 120.1l-3.2 -0.5M509.7 281.4l-0.9 3.7M399.1 193.2l-1.0 3.5M518.3 107.5l2.4 0.3M479.0 161.8l-1.0 3.5M562.0 158.4l3.1 0.1M523.3 188.2l0.7 1.9M411.4 277.3l-2.8 2.5M526.2 171.5l1.8 2.9M465.7 241.3l-0.7 1.8M590.3 172.4l1.9 0.3M451.1 192.7l0.4 1.8M394.2 177.6l-1.7 2.2M435.2 154.1l-1.0 2.0M388.8 250.1l-1.9 3.3M440.6 184.8l-0.2 2.3M407.7 214.1l-2.3 1.1M365.4 161.2l-2.6 0.2M415.9 208.6l-0.0 1.8M454.5 252.6l-0.7 2.2M511.4 180.5l2.3 1.4M459.0 185.3l-1.5 2.1M443.0 188.6l-1.0 2.1M401.0 201.8l-1.4 1.5M547.6 170.1l3.0 -0.2M444.3 196.5l-1.6 1.7M401.7 257.0l-0.5 1.8M409.6 168.9l-1.6 1.6M422.0 118.5l-3.8 -0.4M393.3 223.3l-2.6 2.3M551.4 151.9l2.5 -0.3M454.8 200.7l-1.5 1.6M560.4 152.1l3.2 1.8M426.5 154.0l-2.1 0.0M460.4 222.0l-0.6 2.9M485.4 171.1l0.5 3.6M485.3 173.7l-0.4 3.3M367.0 215.7l-0.7 2.4M533.8 186.1l1.2 1.8M526.9 212.8l-0.1 3.2M571.0 213.8l1.7 1.2M456.7 246.4l-1.5 2.0M559.6 171.5l3.5 0.8M401.8 234.2l-2.8 2.1M520.2 276.5l-0.3 2.0M440.9 218.6l-1.2 2.2M440.2 249.1l-1.3 2.7M387.1 217.0l-1.9 2.7M341.3 180.2l-2.4 -0.2M572.0 179.3l2.5 1.1M439.1 237.5l0.9 3.3M453.5 167.3l-0.5 2.4M482.9 169.8l0.5 1.7M454.4 188.6l1.0 3.6M434.8 147.4l-2.5 1.3M514.7 178.9l0.8 2.4M473.1 256.5l-0.6 1.9M506.5 204.6l-0.4 3.3M390.3 159.4l-2.0 0.6M402.5 191.0l-1.0 2.6M409.1 188.3l-2.5 2.5M584.5 179.8l1.4 2.1M459.6 256.2l-0.2 2.9M418.8 205.4l-3.3 1.7M366.3 177.7l-2.4 0.3M378.4 170.5l-2.6 2.0M589.9 220.3l2.3 2.3M391.8 117.9l-3.4 -1.4M512.4 191.5l0.0 2.7M529.9 216.8l1.0 2.2M534.5 248.2l1.3 2.4M598.3 194.5l1.0 1.6M422.4 154.8l-3.7 0.9M448.2 211.4l0.5 3.3M428.3 115.6l-2.9 -0.1M456.0 171.6l-1.5 1.4M556.4 239.9l2.0 2.2M561.1 243.6l1.8 2.0M409.5 213.1l-0.1 2.5M543.4 142.2l2.9 2.3M401.2 152.1l-2.2 2.6M571.9 181.4l1.4 1.3M392.0 167.3l-2.3 3.0M433.1 240.7l-2.3 2.8M550.3 149.9l1.9 1.2M441.1 169.3l-0.1 3.2M517.5 124.2l3.7 -0.7M557.2 151.6l2.8 1.5M426.5 250.0l-1.0 2.3M439.6 176.1l-0.5 1.8M477.7 265.0l-1.3 3.0M392.2 99.5l-3.3 0.8M530.5 188.5l1.1 3.3M537.2 129.4l2.2 1.5M549.3 165.3l2.1 1.2M363.0 160.2l-2.1 1.8M549.4 114.3l2.1 -1.0M365.6 146.9l-2.5 2.5M380.7 129.9l-2.1 -0.2M449.4 252.3l-0.6 2.1M519.1 224.6l-0.1 2.1M452.7 197.7l-0.6 3.1M534.9 250.3l1.1 2.0M415.2 246.0l-1.8 1.8M579.0 205.8l2.1 2.5M538.9 215.2l3.2 1.9M457.3 215.8l0.1 2.5M401.7 198.6l-3.3 1.6M419.6 219.9l-0.2 3.1M437.1 252.0l-0.0 2.6M427.8 156.7l-1.4 3.1M524.5 97.1l2.3 -0.8M547.6 145.4l2.8 0.4M467.2 249.3l0.8 3.3M546.8 231.6l2.3 1.5M437.0 173.5l-2.5 2.2M466.5 246.4l0.3 2.7M449.1 213.4l0.7 2.6M422.6 138.3l-2.5 -0.3M375.5 127.6l-2.2 -0.6M569.2 207.1l1.9 0.3M457.9 276.6l-0.4 2.4M439.7 242.0l0.6 1.9M430.4 230.7l-0.8 2.9M423.0 98.6l-3.2 -0.5M452.8 174.8l0.0 2.6M555.1 124.9l2.0 -0.3M390.1 194.3l-1.9 2.5M442.0 156.3l-3.2 0.9M417.3 170.8l-0.8 1.7M392.0 159.3l-2.3 1.8M420.1 140.6l-2.3 2.7M595.3 165.0l3.2 -0.7M512.9 229.9l0.8 1.7M385.5 97.4l-2.7 -2.2M427.0 220.2l-0.4 3.1M508.6 278.8l1.7 2.1M384.9 157.4l-2.0 0.7M414.7 217.9l-2.4 2.2M562.6 149.5l1.3 1.5M414.5 145.9l-2.4 1.1M523.9 183.4l2.4 2.4M410.2 101.9l-3.3 -1.2M549.0 173.1l1.8 1.0M519.1 122.9l2.6 -1.1M539.2 126.8l2.6 -1.3M424.6 269.5l-0.6 3.3M454.8 175.8l-0.7 3.1M355.3 166.9l-2.2 2.9M378.5 115.0l-3.0 -0.4M544.7 175.9l2.4 1.8M463.8 172.9l-1.3 3.3M425.3 198.0l-1.4 2.7M590.1 186.5l1.2 1.6M546.6 139.7l2.8 -1.0M477.1 161.5l0.1 3.5M366.1 177.5l-1.5 2.5M448.5 219.9l-0.1 2.1M546.6 171.5l3.4 1.6M470.7 183.8l-1.3 2.1M549.4 123.2l2.2 -1.0M377.6 189.0l-1.1 2.6M578.5 145.9l1.8 0.9M464.8 274.4l1.7 3.3M550.9 106.2l2.6 -2.1M481.2 188.7l0.4 2.4M551.9 127.4l2.6 0.4M563.7 148.1l2.0 2.2M449.3 225.7l1.0 2.6M371.9 182.2l-1.1 1.5M536.2 117.4l2.0 0.3M533.8 169.7l1.8 3.0M467.0 165.1l0.3 3.3M506.7 200.4l0.4 3.3M524.9 275.3l0.8 2.7M420.3 167.4l-1.9 1.7M525.9 179.3l2.7 1.2M439.2 182.1l-0.1 2.2M432.9 200.3l0.0 3.5M453.3 210.3l-1.1 2.3M388.2 196.8l-2.6 1.7M421.9 114.7l-2.5 1.0M374.4 233.6l-1.9 1.3M349.2 150.5l-2.4 0.3M366.0 155.7l-2.9 -0.2M544.3 109.5l3.2 -0.3M458.7 204.7l1.1 2.9M407.7 267.8l-2.2 2.4M387.9 157.0l-2.7 -0.1M415.5 206.3l-1.2 1.5M397.1 181.1l-3.1 0.8M527.8 104.9l3.3 0.7M435.9 200.4l-0.5 1.7M416.5 123.9l-2.0 -0.2M560.3 165.5l2.1 2.6M562.8 204.4l0.9 1.8M381.8 229.9l-2.1 2.5M424.0 204.1l-0.9 3.2M531.3 126.6l3.0 0.3M345.7 203.3l-2.9 1.2M592.9 153.9l2.0 1.3M531.5 223.7l1.6 1.6M556.3 121.6l3.8 -0.1M354.3 132.8l-2.2 0.2M551.6 157.3l3.7 0.4M358.2 217.8l-1.9 2.0M546.8 124.2l3.0 -0.8M372.3 192.7l-1.9 2.2M415.0 258.0l-1.7 1.2M468.3 287.6l-1.0 1.7M572.3 245.2l0.4 2.0M420.0 232.9l-0.3 3.5M359.6 237.7l-2.4 2.2M419.6 262.8l-1.1 2.4M383.2 172.3l-2.3 1.6M417.0 267.2l-0.9 1.6M440.8 246.6l-0.4 2.3M439.8 263.8l-0.8 3.0M577.7 128.2l1.7 1.0M504.8 242.6l-0.5 2.4M454.1 277.8l-0.8 2.6M587.6 190.6l1.9 0.0" stroke="#b84a5a" stroke-opacity="0.6" stroke-width="0.9" fill="none"/>
<path d="M590.7 123.8l2.0 -1.1M334.8 156.3l-1.3 1.3M648.4 378.4l0.6 2.3M616.4 153.8l1.8 1.4M375.2 335.5l0.3 1.9M634.2 160.9l-0.2 1.8M555.2 289.5l1.1 0.6M517.4 297.8l0.2 2.5M612.7 209.8l1.7 0.9M582.1 256.8l0.4 1.2M391.3 270.0l-1.4 1.5M586.0 99.7l1.8 -1.1M659.6 405.3l2.3 0.9M455.6 336.3l-1.0 1.5M369.8 251.5l-1.2 1.6M318.9 174.8l-1.6 1.5M633.6 389.0l1.4 0.6M462.4 302.7l-0.1 1.3M573.9 375.4l1.6 1.5M584.7 117.7l1.3 0.2M589.0 120.4l2.3 0.6M603.6 313.0l-1.5 1.5M429.7 371.5l0.8 1.0M544.4 297.7l-0.8 1.4M378.8 277.2l0.0 1.4M374.6 267.7l-1.0 1.3M556.5 269.9l1.2 1.2M380.8 389.5l1.7 1.3M641.3 242.5l0.3 1.6M410.6 308.3l1.8 -0.2M406.4 291.0l-1.0 1.0M604.0 357.9l-1.4 0.9M389.5 420.0l-2.2 0.1M574.0 105.3l1.3 0.4M656.5 298.5l-1.7 1.2M583.0 267.5l1.1 1.1M395.9 305.8l-1.5 0.8M507.1 328.7l-1.3 1.1M336.0 228.7l-1.5 1.2M336.1 115.2l-1.3 -0.4M323.3 149.1l-1.3 1.0M529.4 396.8l1.5 -0.1M627.4 413.0l-1.2 -1.3M558.7 429.2l-1.7 0.4M355.8 250.4l-2.2 0.9M357.5 283.9l1.6 1.0M650.4 231.7l1.3 1.9M455.9 418.6l-2.0 -1.4M577.1 109.9l1.4 -0.7M333.8 350.1l-1.4 -1.4M637.6 307.9l2.0 -0.9M425.7 340.3l1.7 1.5M546.5 277.3l1.3 1.0M421.0 378.4l-0.6 -1.8M642.2 314.1l1.1 -0.8M422.0 386.8l-0.6 -1.1M528.0 407.4l-2.4 -0.3M648.0 100.1l1.0 -1.8M595.9 92.2l0.7 -2.4M332.1 147.0l-1.5 -0.2M377.7 97.1l-1.5 0.4M396.1 289.3l-1.3 0.9M556.4 266.3l1.1 1.0M581.4 111.3l1.6 -0.1M551.8 300.1l-0.3 -1.3M333.1 252.1l1.5 0.8M433.3 332.5l-1.9 1.1M595.3 234.0l1.2 1.3M523.4 383.5l1.0 0.7M422.3 292.1l0.4 2.3M515.6 305.5l1.1 1.7M528.7 408.1l-1.6 -0.7M564.4 258.8l1.0 1.4M380.2 336.9l0.8 -0.9M560.7 399.0l-0.3 1.5M426.7 297.1l-0.4 2.3M314.4 92.3l-0.7 1.4M660.0 307.5l-0.3 -1.5M326.3 231.9l-0.2 -1.9M549.4 419.2l1.0 0.7M353.4 308.9l0.2 1.2M330.2 227.1l-1.3 0.6M580.5 242.2l1.9 1.4M624.7 345.2l-0.7 -1.3M469.6 296.5l-0.8 1.4M400.8 278.5l-0.1 2.2M411.1 338.4l-1.4 -1.7M589.3 370.9l0.8 1.0M314.4 277.1l1.0 -0.9M605.5 220.4l1.3 2.1M642.9 375.1l-0.7 1.5M566.7 359.3l0.6 1.5M616.0 264.3l-0.3 1.5M332.1 192.2l-0.8 1.0M599.9 382.0l0.0 -2.0M522.8 399.0l-1.7 0.3M357.3 242.6l-1.1 0.8M603.3 169.2l2.0 0.5M427.2 308.1l1.4 -0.3M600.6 283.5l-0.3 -2.3M606.4 106.7l-0.2 -1.8M442.3 308.2l-1.3 1.7M594.1 248.2l1.6 1.4M572.6 110.7l2.3 0.4M345.3 288.6l2.0 1.4M314.4 360.1l1.7 -1.5M656.7 291.1l0.7 1.1M526.7 387.5l-0.4 -1.4M337.4 191.8l-1.7 0.0M342.7 212.4l-1.6 1.3M451.2 359.8l-1.8 -0.6M642.7 162.5l0.9 0.9M408.8 300.5l-1.3 2.1M336.8 248.0l-1.5 1.7M539.5 305.8l0.5 1.7M376.2 358.7l0.2 1.5M546.8 281.3l0.5 2.1M505.1 385.2l-1.1 -1.5M346.2 425.9l2.1 0.7M320.9 147.9l-1.2 1.0M650.6 216.3l-0.2 -2.1M329.9 351.1l0.2 2.2M458.2 292.4l0.1 1.6M591.3 266.3l-1.7 -1.5M631.1 283.3l-0.1 -2.0M620.5 209.0l1.6 1.2M605.9 357.8l-0.3 1.8M319.1 244.5l2.0 0.4M432.1 321.1l1.2 0.6M523.7 368.7l-1.5 0.8M422.7 329.5l1.0 -1.5M504.9 308.3l1.0 1.7M380.3 261.4l-1.5 1.4M590.2 422.1l-1.5 -1.5M605.3 382.7l1.6 0.3M353.3 240.6l-1.2 2.2M572.4 315.8l1.5 -0.6M616.0 183.8l1.3 0.8M533.8 400.0l0.4 1.3M386.0 264.5l-0.7 1.0M384.4 389.1l1.2 1.6M464.7 378.6l-0.7 1.4M604.3 145.2l2.1 0.9M593.8 104.1l2.0 -1.1M581.4 314.9l-1.7 0.3M635.4 389.7l1.3 -0.8M658.3 216.9l-0.1 1.7M659.7 197.5l1.2 0.9M554.6 286.1l1.0 2.2M463.1 294.4l-0.9 1.6M340.9 215.4l-1.2 0.5M420.1 403.3l2.2 0.8M613.6 273.1l-1.0 0.7M446.4 390.1l1.3 -0.1" stroke="#a04a6a" stroke-opacity="0.5" stroke-width="0.9" fill="none"/>
<g filter="url(#b4)" opacity="0.55"><path d="M512.0 86.0 C520.5 90.8 512.9 106.0 513.0 115.0 C513.1 124.0 513.0 132.8 512.5 140.0 C512.0 147.2 510.9 153.3 510.0 158.0 C509.1 162.7 507.7 164.3 507.0 168.0 C506.3 171.7 506.4 176.3 506.0 180.0 C505.6 183.7 505.2 186.5 504.6 190.0 C504.0 193.5 503.5 197.3 502.4 201.0 C501.3 204.7 499.3 208.3 498.0 212.0 C496.7 215.7 495.2 219.3 494.8 223.0 C494.4 226.7 495.0 230.3 495.5 234.0 C496.0 237.7 497.0 241.3 498.0 245.0 C499.0 248.7 500.5 252.3 501.3 256.0 C502.1 259.7 502.3 263.3 502.6 267.0 C502.9 270.7 503.3 274.2 503.3 278.0 C503.3 281.8 502.8 286.0 502.4 290.0 C502.0 294.0 501.7 297.0 501.0 302.0 C500.3 307.0 498.7 314.5 498.0 320.0 C497.3 325.5 497.0 328.3 496.8 335.0 C496.6 341.7 496.9 350.8 497.0 360.0 C497.1 369.2 497.3 380.8 497.6 390.0 C497.9 399.2 497.8 407.3 499.0 415.0 C500.2 422.7 509.7 432.5 505.0 436.0 C500.3 439.5 475.5 439.3 471.0 436.0 C466.5 432.7 476.5 423.7 478.0 416.0 C479.5 408.3 479.5 399.3 480.0 390.0 C480.5 380.7 480.9 369.2 481.0 360.0 C481.1 350.8 480.9 344.2 480.8 335.0 C480.7 325.8 480.1 312.5 480.5 305.0 C480.9 297.5 482.7 294.5 483.2 290.0 C483.7 285.5 483.5 281.8 483.4 278.0 C483.2 274.2 483.0 270.7 482.3 267.0 C481.6 263.3 480.4 259.7 479.2 256.0 C477.9 252.3 476.1 248.7 474.8 245.0 C473.5 241.3 472.1 237.7 471.5 234.0 C470.9 230.3 471.1 226.7 471.5 223.0 C471.9 219.3 472.5 215.7 473.7 212.0 C474.9 208.3 476.6 204.7 478.5 201.0 C480.4 197.3 483.1 193.5 485.0 190.0 C486.9 186.5 489.1 183.7 490.0 180.0 C490.9 176.3 491.7 172.0 490.5 168.0 C489.3 164.0 486.2 160.7 483.0 156.0 C479.8 151.3 473.8 146.8 471.0 140.0 C468.2 133.2 467.5 124.0 466.0 115.0 C464.5 106.0 454.3 90.8 462.0 86.0 C469.7 81.2 503.5 81.2 512.0 86.0Z" fill="#94a8e8" stroke="#94a8e8" stroke-width="6"/><ellipse cx="458" cy="123" rx="29" ry="36" fill="#94a8e8" /></g>
<g filter="url(#b1)"><path d="M512.0 86.0 C520.5 90.8 512.9 106.0 513.0 115.0 C513.1 124.0 513.0 132.8 512.5 140.0 C512.0 147.2 510.9 153.3 510.0 158.0 C509.1 162.7 507.7 164.3 507.0 168.0 C506.3 171.7 506.4 176.3 506.0 180.0 C505.6 183.7 505.2 186.5 504.6 190.0 C504.0 193.5 503.5 197.3 502.4 201.0 C501.3 204.7 499.3 208.3 498.0 212.0 C496.7 215.7 495.2 219.3 494.8 223.0 C494.4 226.7 495.0 230.3 495.5 234.0 C496.0 237.7 497.0 241.3 498.0 245.0 C499.0 248.7 500.5 252.3 501.3 256.0 C502.1 259.7 502.3 263.3 502.6 267.0 C502.9 270.7 503.3 274.2 503.3 278.0 C503.3 281.8 502.8 286.0 502.4 290.0 C502.0 294.0 501.7 297.0 501.0 302.0 C500.3 307.0 498.7 314.5 498.0 320.0 C497.3 325.5 497.0 328.3 496.8 335.0 C496.6 341.7 496.9 350.8 497.0 360.0 C497.1 369.2 497.3 380.8 497.6 390.0 C497.9 399.2 497.8 407.3 499.0 415.0 C500.2 422.7 509.7 432.5 505.0 436.0 C500.3 439.5 475.5 439.3 471.0 436.0 C466.5 432.7 476.5 423.7 478.0 416.0 C479.5 408.3 479.5 399.3 480.0 390.0 C480.5 380.7 480.9 369.2 481.0 360.0 C481.1 350.8 480.9 344.2 480.8 335.0 C480.7 325.8 480.1 312.5 480.5 305.0 C480.9 297.5 482.7 294.5 483.2 290.0 C483.7 285.5 483.5 281.8 483.4 278.0 C483.2 274.2 483.0 270.7 482.3 267.0 C481.6 263.3 480.4 259.7 479.2 256.0 C477.9 252.3 476.1 248.7 474.8 245.0 C473.5 241.3 472.1 237.7 471.5 234.0 C470.9 230.3 471.1 226.7 471.5 223.0 C471.9 219.3 472.5 215.7 473.7 212.0 C474.9 208.3 476.6 204.7 478.5 201.0 C480.4 197.3 483.1 193.5 485.0 190.0 C486.9 186.5 489.1 183.7 490.0 180.0 C490.9 176.3 491.7 172.0 490.5 168.0 C489.3 164.0 486.2 160.7 483.0 156.0 C479.8 151.3 473.8 146.8 471.0 140.0 C468.2 133.2 467.5 124.0 466.0 115.0 C464.5 106.0 454.3 90.8 462.0 86.0 C469.7 81.2 503.5 81.2 512.0 86.0Z" fill="#d0d8f0" stroke="#d0d8f0" stroke-width="3"/><ellipse cx="458" cy="123" rx="26" ry="33" fill="#d0d8f0" /></g>
<g filter="url(#b06)"><path d="M512.0 86.0 C520.5 90.8 512.9 106.0 513.0 115.0 C513.1 124.0 513.0 132.8 512.5 140.0 C512.0 147.2 510.9 153.3 510.0 158.0 C509.1 162.7 507.7 164.3 507.0 168.0 C506.3 171.7 506.4 176.3 506.0 180.0 C505.6 183.7 505.2 186.5 504.6 190.0 C504.0 193.5 503.5 197.3 502.4 201.0 C501.3 204.7 499.3 208.3 498.0 212.0 C496.7 215.7 495.2 219.3 494.8 223.0 C494.4 226.7 495.0 230.3 495.5 234.0 C496.0 237.7 497.0 241.3 498.0 245.0 C499.0 248.7 500.5 252.3 501.3 256.0 C502.1 259.7 502.3 263.3 502.6 267.0 C502.9 270.7 503.3 274.2 503.3 278.0 C503.3 281.8 502.8 286.0 502.4 290.0 C502.0 294.0 501.7 297.0 501.0 302.0 C500.3 307.0 498.7 314.5 498.0 320.0 C497.3 325.5 497.0 328.3 496.8 335.0 C496.6 341.7 496.9 350.8 497.0 360.0 C497.1 369.2 497.3 380.8 497.6 390.0 C497.9 399.2 497.8 407.3 499.0 415.0 C500.2 422.7 509.7 432.5 505.0 436.0 C500.3 439.5 475.5 439.3 471.0 436.0 C466.5 432.7 476.5 423.7 478.0 416.0 C479.5 408.3 479.5 399.3 480.0 390.0 C480.5 380.7 480.9 369.2 481.0 360.0 C481.1 350.8 480.9 344.2 480.8 335.0 C480.7 325.8 480.1 312.5 480.5 305.0 C480.9 297.5 482.7 294.5 483.2 290.0 C483.7 285.5 483.5 281.8 483.4 278.0 C483.2 274.2 483.0 270.7 482.3 267.0 C481.6 263.3 480.4 259.7 479.2 256.0 C477.9 252.3 476.1 248.7 474.8 245.0 C473.5 241.3 472.1 237.7 471.5 234.0 C470.9 230.3 471.1 226.7 471.5 223.0 C471.9 219.3 472.5 215.7 473.7 212.0 C474.9 208.3 476.6 204.7 478.5 201.0 C480.4 197.3 483.1 193.5 485.0 190.0 C486.9 186.5 489.1 183.7 490.0 180.0 C490.9 176.3 491.7 172.0 490.5 168.0 C489.3 164.0 486.2 160.7 483.0 156.0 C479.8 151.3 473.8 146.8 471.0 140.0 C468.2 133.2 467.5 124.0 466.0 115.0 C464.5 106.0 454.3 90.8 462.0 86.0 C469.7 81.2 503.5 81.2 512.0 86.0Z" fill="url(#plg)"/></g>
<defs><linearGradient id="stg" gradientUnits="userSpaceOnUse" x1="0" y1="150" x2="0" y2="185"><stop offset="0" stop-color="#de7250" stop-opacity="0"/><stop offset="1" stop-color="#de7250"/></linearGradient><linearGradient id="crg" gradientUnits="userSpaceOnUse" x1="0" y1="160" x2="0" y2="195"><stop offset="0" stop-color="#bc3428" stop-opacity="0.2"/><stop offset="1" stop-color="#bc3428"/></linearGradient></defs>
<path d="M511.1 150.0 C516.4 151.0 510.7 154.0 510.3 156.0 C509.9 158.0 509.3 160.0 508.8 162.0 C508.3 164.0 507.4 166.0 507.0 168.0 C506.6 170.0 506.7 172.0 506.5 174.0 C506.3 176.0 506.2 178.0 506.0 180.0 C505.8 182.0 505.5 184.0 505.2 186.0 C504.9 188.0 504.6 190.0 504.2 192.0 C503.8 194.0 503.5 196.0 503.0 198.0 C502.5 200.0 501.9 202.0 501.2 204.0 C500.5 206.0 499.5 208.0 498.8 210.0 C498.1 212.0 497.5 214.0 496.8 216.0 C496.2 218.0 495.4 220.0 495.1 222.0 C494.8 224.0 495.1 226.0 495.1 228.0 C495.2 230.0 495.2 232.0 495.5 234.0 C495.8 236.0 496.4 238.0 496.9 240.0 C497.3 242.0 497.8 244.0 498.3 246.0 C498.8 248.0 499.6 250.0 500.1 252.0 C500.6 254.0 501.2 256.0 501.5 258.0 C501.9 260.0 502.0 262.0 502.2 264.0 C502.5 266.0 502.6 268.0 502.8 270.0 C502.9 272.0 503.1 274.0 503.2 276.0 C503.2 278.0 503.1 280.0 503.0 282.0 C502.9 284.0 502.7 286.0 502.5 288.0 C502.4 290.0 502.2 292.0 501.9 294.0 C501.7 296.0 501.5 298.0 501.2 300.0 C501.0 302.0 500.6 304.0 500.3 306.0 C500.0 308.0 499.7 310.0 499.3 312.0 C499.0 314.0 498.6 316.0 498.3 318.0 C498.1 320.0 497.9 322.0 497.7 324.0 C497.5 326.0 497.3 328.0 497.2 330.0 C497.1 332.0 496.9 334.0 496.8 336.0 C496.8 338.0 496.8 340.0 496.9 342.0 C496.9 344.0 496.9 346.0 496.9 348.0 C496.9 350.0 496.9 352.0 497.0 354.0 C497.0 356.0 497.0 358.0 497.0 360.0 C497.0 362.0 497.1 364.0 497.1 366.0 C497.2 368.0 497.2 370.0 497.2 372.0 C497.3 374.0 497.3 376.0 497.4 378.0 C497.4 380.0 497.4 382.0 497.5 384.0 C497.5 386.0 497.5 388.0 497.6 390.0 C497.7 392.0 497.8 394.0 497.9 396.0 C498.0 398.0 498.2 400.0 498.3 402.0 C498.4 404.0 498.5 406.0 498.6 408.0 C498.7 410.0 498.6 412.0 498.9 414.0 C499.2 416.0 499.9 418.0 500.4 420.0 C501.0 422.0 501.6 424.0 502.1 426.0 C502.7 428.0 508.8 431.0 503.9 432.0 C498.9 433.0 477.3 433.0 472.4 432.0 C467.5 431.0 473.8 428.0 474.5 426.0 C475.2 424.0 476.0 422.0 476.6 420.0 C477.2 418.0 477.8 416.0 478.2 414.0 C478.5 412.0 478.5 410.0 478.6 408.0 C478.8 406.0 478.9 404.0 479.1 402.0 C479.2 400.0 479.4 398.0 479.5 396.0 C479.7 394.0 479.9 392.0 480.0 390.0 C480.1 388.0 480.1 386.0 480.2 384.0 C480.3 382.0 480.3 380.0 480.4 378.0 C480.5 376.0 480.5 374.0 480.6 372.0 C480.7 370.0 480.7 368.0 480.8 366.0 C480.9 364.0 481.0 362.0 481.0 360.0 C481.0 358.0 481.0 356.0 481.0 354.0 C480.9 352.0 480.9 350.0 480.9 348.0 C480.9 346.0 480.9 344.0 480.9 342.0 C480.8 340.0 480.8 338.0 480.8 336.0 C480.8 334.0 480.8 332.0 480.8 330.0 C480.7 328.0 480.7 326.0 480.7 324.0 C480.7 322.0 480.6 320.0 480.6 318.0 C480.6 316.0 480.6 314.0 480.6 312.0 C480.6 310.0 480.4 308.0 480.5 306.0 C480.6 304.0 481.1 302.0 481.4 300.0 C481.7 298.0 482.2 296.0 482.5 294.0 C482.8 292.0 483.1 290.0 483.2 288.0 C483.4 286.0 483.3 284.0 483.3 282.0 C483.3 280.0 483.3 278.0 483.2 276.0 C483.1 274.0 482.9 272.0 482.6 270.0 C482.3 268.0 481.9 266.0 481.5 264.0 C481.0 262.0 480.4 260.0 479.8 258.0 C479.1 256.0 478.4 254.0 477.6 252.0 C476.8 250.0 475.9 248.0 475.2 246.0 C474.5 244.0 473.9 242.0 473.3 240.0 C472.7 238.0 471.8 236.0 471.5 234.0 C471.2 232.0 471.5 230.0 471.5 228.0 C471.5 226.0 471.5 224.0 471.7 222.0 C471.9 220.0 472.4 218.0 472.9 216.0 C473.4 214.0 473.9 212.0 474.6 210.0 C475.3 208.0 476.2 206.0 477.2 204.0 C478.1 202.0 479.2 200.0 480.3 198.0 C481.4 196.0 482.7 194.0 483.8 192.0 C484.9 190.0 486.0 188.0 487.0 186.0 C488.0 184.0 489.5 182.0 490.0 180.0 C490.5 178.0 490.2 176.0 490.2 174.0 C490.3 172.0 491.1 170.0 490.5 168.0 C489.9 166.0 488.0 164.0 486.8 162.0 C485.5 160.0 484.4 158.0 483.0 156.0 C481.6 154.0 473.8 151.0 478.5 150.0 C483.2 149.0 505.8 149.0 511.1 150.0Z" fill="url(#stg)" filter="url(#b06)"/>
<g filter="url(#b06)"><ellipse cx="458" cy="123" rx="23" ry="30" fill="#e28c68" /><path d="M449 86 H470 L474 110 L462 104z" fill="#e28c68"/></g>
<ellipse cx="459" cy="125" rx="17" ry="21" fill="#dcac92" filter="url(#b2)"/>
<path d="M470 226 Q465 245 474 262 L478 258 Q471 245 473 228Z" fill="#dfe4f4" opacity="0.8" filter="url(#b2)"/>
<path d="M515.3 287.9l1.2 1.7M456.8 277.3l-2.5 -0.2M528.0 193.1l-1.2 1.9M519.9 216.2l1.1 -1.4M508.7 214.2l1.8 -1.4M450.5 234.0l-2.2 2.0M520.5 191.9l-0.0 -1.6M517.2 267.1l-0.2 -2.5M514.7 245.2l1.7 1.6M455.7 277.9l2.1 1.6M520.7 222.1l-2.1 -1.1M454.6 265.5l0.5 -2.9M466.3 183.8l1.5 -0.9M454.7 198.8l2.6 -1.2M464.1 262.9l1.8 1.7M463.5 270.1l1.9 0.8M516.3 287.9l2.0 0.6M457.0 229.5l-1.0 1.8M475.3 294.7l1.6 -0.6M523.3 276.1l0.8 -2.3M512.2 195.5l-1.1 -1.9M528.3 186.2l2.7 0.4M464.6 215.8l0.5 2.0M444.9 221.6l-1.8 -0.2M523.4 255.7l0.3 -1.6M467.2 267.3l1.9 -0.1M523.8 204.5l-2.6 -0.1M455.3 223.3l2.1 -0.7M525.8 303.6l2.2 -0.4M447.9 226.1l0.8 2.1M476.1 295.4l-0.9 1.8M515.3 191.3l-1.6 -1.1M450.7 199.5l-1.7 -0.6M509.3 238.4l2.6 0.9M454.5 209.5l2.6 -0.7M463.2 249.8l1.9 1.0M478.2 286.2l0.7 -1.4M461.9 247.4l2.1 2.2M444.5 227.8l-1.6 -0.1M479.8 184.9l1.5 1.2M456.7 272.4l-1.4 1.7M463.2 282.0l-2.2 -1.4M513.8 294.0l-1.5 -1.7M452.2 244.7l2.3 -1.9M471.5 305.0l0.9 2.6M445.5 236.6l-0.7 1.7M475.0 262.1l0.8 -2.2M513.4 223.4l-1.0 -2.4M508.3 207.0l0.1 2.7M530.9 199.9l-2.1 1.6M451.8 300.7l-2.1 0.8M520.4 184.2l-2.5 0.5M480.7 183.2l-0.2 -2.5M523.5 218.0l-1.8 1.6M457.1 307.2l-1.5 1.1M467.5 301.4l-1.7 1.2M513.7 205.8l-1.2 -1.3M456.8 288.1l0.4 -1.5M471.3 253.3l2.6 1.2M521.7 301.0l1.6 0.2M513.6 287.9l2.4 -1.2M462.7 193.9l-0.8 2.8M478.1 285.5l1.8 -0.4M525.8 268.7l1.3 0.9M462.7 300.4l-1.7 0.5M510.3 284.0l-1.9 -1.5M525.2 307.1l0.3 -2.2M455.7 249.2l-0.4 -1.9M524.4 280.4l2.0 0.5M512.0 196.9l-2.4 -0.4" stroke="#b84a5a" stroke-opacity="0.55" stroke-width="0.9" fill="none"/>
<path d="M505 140 L514 142 Q514 170 507 198 L502 200 Q506 175 505 140Z" fill="#c8c8dc" filter="url(#b1)"/>
<path d="M498.0 150.0 C500.0 150.0 503.3 167.3 504.3 172.0 C505.2 176.7 504.0 176.0 503.8 178.0 C503.6 180.0 503.3 182.0 503.0 184.0 C502.8 186.0 502.5 188.0 502.2 190.0 C501.9 192.0 501.4 194.0 501.0 196.0 C500.6 198.0 500.2 200.0 499.6 202.0 C499.0 204.0 498.0 206.0 497.2 208.0 C496.4 210.0 495.7 212.0 495.0 214.0 C494.4 216.0 493.7 218.0 493.3 220.0 C492.9 222.0 492.6 224.0 492.6 226.0 C492.5 228.0 492.7 230.0 493.0 232.0 C493.2 234.0 493.6 236.0 494.0 238.0 C494.4 240.0 494.9 242.0 495.4 244.0 C495.9 246.0 496.5 248.0 497.1 250.0 C497.7 252.0 498.5 254.0 498.9 256.0 C499.3 258.0 499.4 260.0 499.6 262.0 C499.8 264.0 500.1 266.0 500.3 268.0 C500.4 270.0 500.6 272.0 500.6 274.0 C500.7 276.0 500.8 278.0 500.8 280.0 C500.7 282.0 500.5 284.0 500.3 286.0 C500.1 288.0 500.0 290.0 499.8 292.0 C499.6 294.0 501.7 297.0 499.1 298.0 C496.4 299.0 486.3 299.0 484.0 298.0 C481.6 297.0 484.8 294.0 485.0 292.0 C485.3 290.0 485.4 288.0 485.5 286.0 C485.6 284.0 485.6 282.0 485.6 280.0 C485.5 278.0 485.4 276.0 485.2 274.0 C485.0 272.0 485.0 270.0 484.6 268.0 C484.2 266.0 483.6 264.0 483.1 262.0 C482.6 260.0 482.1 258.0 481.4 256.0 C480.7 254.0 479.8 252.0 479.0 250.0 C478.2 248.0 477.4 246.0 476.7 244.0 C476.0 242.0 475.4 240.0 474.9 238.0 C474.4 236.0 473.9 234.0 473.7 232.0 C473.5 230.0 473.6 228.0 473.7 226.0 C473.8 224.0 474.0 222.0 474.3 220.0 C474.6 218.0 474.9 216.0 475.5 214.0 C476.1 212.0 476.9 210.0 477.6 208.0 C478.4 206.0 479.3 204.0 480.3 202.0 C481.3 200.0 482.5 198.0 483.7 196.0 C484.8 194.0 486.1 192.0 487.2 190.0 C488.3 188.0 489.4 186.0 490.2 184.0 C491.0 182.0 491.9 180.0 492.3 178.0 C492.7 176.0 491.6 176.7 492.5 172.0 C493.5 167.3 496.0 150.0 498.0 150.0Z" fill="url(#crg)" opacity="0.85" filter="url(#b1)"/>
<path d="M499.2 290.0 C501.2 291.0 498.7 294.0 498.5 296.0 C498.3 298.0 498.1 300.0 497.8 302.0 C497.5 304.0 497.1 306.0 496.8 308.0 C496.5 310.0 496.1 312.0 495.8 314.0 C495.5 316.0 495.0 318.0 494.8 320.0 C494.6 322.0 494.5 324.0 494.3 326.0 C494.2 328.0 494.0 330.0 493.8 332.0 C493.7 334.0 493.7 336.0 493.6 338.0 C493.6 340.0 493.7 342.0 493.7 344.0 C493.7 346.0 493.7 348.0 493.7 350.0 C493.7 352.0 493.7 354.0 493.8 356.0 C493.8 358.0 493.8 360.0 493.8 362.0 C493.9 364.0 493.9 366.0 494.0 368.0 C494.0 370.0 494.0 372.0 494.1 374.0 C494.1 376.0 494.2 378.0 494.2 380.0 C494.2 382.0 494.3 384.0 494.3 386.0 C494.4 388.0 494.4 390.0 494.5 392.0 C494.6 394.0 494.7 396.0 494.8 398.0 C495.0 400.0 497.3 403.0 495.2 404.0 C493.1 405.0 484.2 405.0 482.1 404.0 C480.0 403.0 482.4 400.0 482.6 398.0 C482.7 396.0 482.9 394.0 483.0 392.0 C483.2 390.0 483.3 388.0 483.3 386.0 C483.4 384.0 483.5 382.0 483.5 380.0 C483.6 378.0 483.7 376.0 483.7 374.0 C483.8 372.0 483.9 370.0 483.9 368.0 C484.0 366.0 484.1 364.0 484.1 362.0 C484.2 360.0 484.2 358.0 484.2 356.0 C484.2 354.0 484.1 352.0 484.1 350.0 C484.1 348.0 484.1 346.0 484.1 344.0 C484.1 342.0 484.0 340.0 484.0 338.0 C484.0 336.0 484.0 334.0 484.0 332.0 C484.0 330.0 483.9 328.0 483.9 326.0 C483.9 324.0 483.9 322.0 483.8 320.0 C483.8 318.0 483.8 316.0 483.8 314.0 C483.8 312.0 483.7 310.0 483.7 308.0 C483.8 306.0 484.0 304.0 484.2 302.0 C484.5 300.0 485.0 298.0 485.3 296.0 C485.7 294.0 484.1 291.0 486.4 290.0 C488.7 289.0 497.2 289.0 499.2 290.0Z" fill="#cc4a34" opacity="0.55" filter="url(#b1)"/>
<path d="M497.4 192.0 C498.1 193.0 496.1 196.0 495.5 198.0 C494.8 200.0 494.2 202.0 493.4 204.0 C492.7 206.0 491.9 208.0 491.2 210.0 C490.6 212.0 490.1 214.0 489.6 216.0 C489.0 218.0 488.4 220.0 488.1 222.0 C487.8 224.0 487.9 226.0 487.8 228.0 C487.7 230.0 487.5 232.0 487.7 234.0 C487.8 236.0 488.4 238.0 488.8 240.0 C489.2 242.0 489.5 244.0 490.0 246.0 C490.5 248.0 491.1 250.0 491.6 252.0 C492.1 254.0 492.6 256.0 493.0 258.0 C493.3 260.0 493.6 262.0 493.8 264.0 C494.1 266.0 494.3 268.0 494.4 270.0 C494.6 272.0 494.8 274.0 494.9 276.0 C495.0 278.0 495.0 280.0 495.0 282.0 C495.0 284.0 495.0 286.0 495.0 288.0 C494.9 290.0 495.8 293.0 494.7 294.0 C493.6 295.0 489.3 295.0 488.3 294.0 C487.3 293.0 488.5 290.0 488.6 288.0 C488.6 286.0 488.6 284.0 488.6 282.0 C488.6 280.0 488.6 278.0 488.5 276.0 C488.4 274.0 488.2 272.0 488.0 270.0 C487.9 268.0 487.7 266.0 487.4 264.0 C487.2 262.0 486.9 260.0 486.6 258.0 C486.2 256.0 485.7 254.0 485.2 252.0 C484.7 250.0 484.1 248.0 483.6 246.0 C483.1 244.0 482.8 242.0 482.4 240.0 C482.0 238.0 481.4 236.0 481.3 234.0 C481.1 232.0 481.3 230.0 481.4 228.0 C481.5 226.0 481.4 224.0 481.7 222.0 C482.0 220.0 482.6 218.0 483.2 216.0 C483.7 214.0 484.2 212.0 484.8 210.0 C485.5 208.0 486.3 206.0 487.0 204.0 C487.8 202.0 488.4 200.0 489.1 198.0 C489.7 196.0 489.6 193.0 491.0 192.0 C492.4 191.0 496.6 191.0 497.4 192.0Z" fill="#6a5cb4" opacity="0.55" filter="url(#b1)"/>
<path d="M484 90 Q492 125 499 172" stroke="#d85a3c" stroke-width="3.5" fill="none" opacity="0.75" filter="url(#b1)"/>
<path d="M488.5 290 Q489 360 488.5 400" stroke="#e4a890" stroke-width="4" fill="none" opacity="0.75" filter="url(#b06)"/>
<path d="M484.3 295 Q484.5 360 483.5 410 M493 295 Q493 360 493.5 410" stroke="#c8442e" stroke-width="2.6" fill="none" opacity="0.8" filter="url(#b06)"/>
<path d="M488.5 398 Q487.5 418 485.5 434 L493 434 Q490.5 418 488.5 398Z" fill="#d8c8d4" filter="url(#b1)"/>
<path d="M503.3 116.7l-0.3 9.3M477.3 93.7l1.1 9.4M488.7 134.3l0.6 15.1M511.7 92.5l-0.7 14.5M480.5 136.5l1.4 16.5M482.3 126.4l2.6 17.1M481.5 123.2l0.9 8.5M487.2 143.1l0.6 8.5M475.1 98.0l2.1 13.0M488.1 91.1l0.9 11.6M482.9 107.9l0.8 11.7M482.3 136.6l1.2 12.0M476.6 107.8l1.7 10.8M506.4 91.1l-0.6 19.1M499.3 147.0l0.1 13.8M475.5 99.2l1.4 17.0M512.1 87.5l-0.9 10.0M496.6 134.9l-0.4 16.8M470.4 113.4l2.3 18.5M491.1 131.5l0.1 9.1M504.1 133.1l-0.3 21.2M504.6 86.9l-0.7 21.5M478.1 158.5l2.4 13.4M475.2 112.5l1.4 12.0M487.3 157.5l1.2 9.7M497.2 122.6l0.3 11.5M502.4 142.0l0.5 16.1M479.2 156.1l1.9 10.4M497.4 95.9l0.4 9.9M474.5 137.0l1.2 9.3M495.3 129.1l0.7 20.8M475.3 98.9l1.3 17.1M471.9 102.0l2.7 17.2M497.2 112.9l0.1 19.7M480.8 115.8l1.5 19.1M501.2 158.3l0.4 12.7M492.9 114.5l0.7 12.4M479.2 143.5l0.8 7.5M501.8 146.2l0.5 12.1M477.3 157.5l2.0 14.5M469.3 119.2l2.8 15.0M501.9 156.8l-0.7 13.6M486.0 99.6l0.7 11.0M489.5 94.1l0.3 7.9M507.2 95.6l-0.6 21.3M468.2 107.1l1.6 14.0M489.9 137.3l0.5 7.9M480.6 116.6l0.9 8.5M474.3 133.3l2.6 21.0M493.5 122.2l0.7 11.0M501.6 89.3l-0.1 10.4M507.7 121.8l-0.1 10.8M483.9 123.7l0.5 7.2M484.9 124.8l2.0 20.2M506.6 107.6l-0.8 19.3M475.9 145.4l2.0 17.8M507.6 137.0l0.1 14.8M490.2 155.2l0.9 16.8M487.0 151.9l1.5 19.4M486.2 134.6l1.2 16.6M493.9 86.4l0.6 13.9M498.7 102.5l0.6 20.4M510.7 100.4l-0.2 9.6M478.2 111.6l2.9 20.5M500.4 158.9l-0.3 13.1M502.8 87.1l-0.6 19.6M508.3 86.8l-0.3 20.6M495.9 112.3l0.2 9.5M491.7 125.4l0.4 10.1M474.5 120.5l2.7 20.7M485.2 154.6l1.4 10.3M478.5 92.8l1.1 14.9M479.8 121.2l2.2 15.1M499.5 156.9l0.4 8.5M497.7 104.7l0.0 8.8M479.7 143.5l2.3 14.2M491.6 91.6l0.6 13.6M475.8 100.4l1.8 11.6M493.1 114.9l0.3 14.2M507.5 126.7l0.3 20.3M440.2 145.6l1.5 2.8M464.8 151.5l3.2 -0.1M434.6 122.8l-0.9 3.1M433.6 136.0l0.4 3.2M433.9 131.4l-0.0 3.2M435.7 130.4l-0.1 3.2M445.6 96.8l-3.1 0.9M465.0 152.7l3.2 -0.1M440.5 142.1l1.3 2.9M440.5 140.7l1.2 3.0M442.6 98.6l-2.9 1.3M446.6 151.1l2.3 2.2M434.7 128.1l-0.3 3.2M436.8 108.4l-2.2 2.3M440.8 98.6l-2.8 1.5M435.6 119.0l-1.3 2.9M432.0 117.2l-1.4 2.9M438.6 109.3l-2.2 2.3M447.9 148.3l2.3 2.2M432.1 121.2l-1.0 3.0M433.3 119.2l-1.2 3.0M434.0 133.2l0.1 3.2M433.6 132.9l0.1 3.2M455.7 154.2l3.0 1.2M435.9 124.6l-0.7 3.1M432.8 131.6l-0.1 3.2M460.7 155.7l3.2 0.5M432.7 115.8l-1.5 2.8M443.7 96.6l-3.0 1.1M434.2 127.7l-0.4 3.2M438.0 141.7l1.1 3.0M442.7 149.7l2.0 2.5M435.2 132.3l0.1 3.2M434.8 135.6l0.4 3.2M436.4 105.1l-2.4 2.1M435.4 117.5l-1.4 2.9M466.1 150.2l3.2 -0.3M460.8 154.3l3.2 0.5M461.3 154.0l3.2 0.4M435.4 113.0l-1.8 2.6M439.7 103.8l-2.6 1.9M437.6 137.1l0.7 3.1M457.5 155.0l3.1 0.9M458.0 152.4l3.1 0.9M445.9 151.9l2.3 2.2" stroke="#f0f0f6" stroke-opacity="0.7" stroke-width="0.9" fill="none" filter="url(#b04)"/>
<path d="M506.9 175.0l0.0 1.9M505.9 184.0l0.0 3.0M505.5 187.0l0.0 3.0M505.1 190.0l0.0 2.2M482.7 193.0l0.0 2.7M481.0 196.0l0.0 2.8M503.9 196.0l0.0 1.8M503.3 199.0l0.0 2.4M502.5 202.0l0.0 2.9M501.3 205.0l0.0 2.8M498.9 211.0l0.0 2.0M472.8 214.0l0.0 2.7M495.3 223.0l0.0 3.0M471.0 226.0l0.0 1.8M471.0 229.0l0.0 1.8M471.0 232.0l0.0 2.1M495.9 232.0l0.0 2.5M471.3 235.0l0.0 1.9M496.2 235.0l0.0 2.5M472.2 238.0l0.0 2.3M496.9 238.0l0.0 2.3M473.1 241.0l0.0 2.9M497.6 241.0l0.0 1.9M498.3 244.0l0.0 2.2M499.1 247.0l0.0 1.8M500.0 250.0l0.0 1.5M477.5 253.0l0.0 2.1M500.9 253.0l0.0 2.6M481.9 268.0l0.0 2.8M482.2 271.0l0.0 2.6M481.8 295.0l0.0 1.9M502.3 295.0l0.0 3.0M481.3 298.0l0.0 1.8M502.0 298.0l0.0 2.7M501.6 301.0l0.0 1.7M500.2 310.0l0.0 2.7M499.7 313.0l0.0 2.1M480.2 322.0l0.0 2.8M480.2 325.0l0.0 2.9M480.3 331.0l0.0 1.8M480.3 334.0l0.0 2.0M480.4 346.0l0.0 1.9M497.4 346.0l0.0 2.4M497.4 349.0l0.0 2.6M480.5 358.0l0.0 2.3M497.6 364.0l0.0 2.8M497.7 370.0l0.0 1.6M480.1 373.0l0.0 2.5M497.8 376.0l0.0 2.4M479.9 379.0l0.0 1.8M479.8 382.0l0.0 1.7M479.4 391.0l0.0 1.7M479.0 397.0l0.0 2.4M498.5 397.0l0.0 2.6M478.7 400.0l0.0 2.2M499.0 406.0l0.0 2.5M474.7 424.0l0.0 2.3M472.6 430.0l0.0 1.5M504.6 433.0l0.0 2.4" stroke="#f4eee0" stroke-opacity="0.7" stroke-width="1" fill="none"/>
<path d="M499.0 172.0l0.2 2.8M497.8 177.2l-0.1 3.2M498.8 179.8l0.6 1.8M494.2 182.4l-0.0 2.7M494.9 185.0l0.2 2.3M493.2 187.6l-0.4 2.2M492.1 192.8l0.4 3.0M491.0 195.4l0.0 2.3M492.6 198.0l-0.5 2.3M491.7 203.2l-0.6 2.0M490.1 205.8l0.4 3.1M490.1 211.0l-0.5 2.5M485.6 213.6l-0.4 3.2M487.8 218.8l0.3 1.8M483.5 221.4l-0.3 2.8M483.1 224.0l-0.6 2.2M481.6 226.6l-0.5 2.4M484.4 229.2l-0.3 2.3M483.4 231.8l-0.4 1.9M483.5 234.4l0.5 2.5M480.6 237.0l0.5 2.9M484.3 239.6l-0.4 2.5M484.1 242.2l-0.3 2.6M483.0 244.8l-0.5 2.9M486.3 247.4l0.2 2.2M487.5 250.0l0.3 2.8M489.8 252.6l-0.3 3.1M492.1 255.2l-0.2 2.6M492.2 257.8l0.3 2.2M492.2 260.4l0.0 2.0M495.2 263.0l-0.6 2.1M494.8 265.6l0.2 2.8M494.7 268.2l-0.4 2.6M492.1 270.8l0.0 3.2M494.8 273.4l0.1 1.9M495.3 276.0l0.2 2.2M493.8 281.2l0.4 2.6M491.6 283.8l-0.2 3.0M493.0 286.4l-0.2 2.4M490.1 289.0l0.1 1.9M492.1 294.2l0.4 2.9M489.4 296.8l0.1 1.9M492.0 299.4l-0.3 2.4M491.8 302.0l0.2 1.9M492.8 304.6l-0.4 3.1M489.7 307.2l-0.5 2.9M493.3 309.8l-0.1 1.9M490.2 315.0l-0.6 2.2M491.3 317.6l0.1 1.9M492.3 320.2l-0.1 2.8M490.4 325.4l-0.3 2.1M490.7 328.0l0.6 2.1M487.2 330.6l-0.2 2.2M486.8 335.8l-0.5 3.0M488.2 338.4l-0.3 2.1M486.3 341.0l0.5 2.3M488.1 343.6l-0.3 2.9M489.9 351.4l0.3 2.9M487.9 354.0l0.2 2.6M491.2 356.6l-0.4 2.3M492.2 359.2l0.6 3.0M490.6 361.8l0.0 2.4M490.4 364.4l0.5 2.3M491.7 372.2l0.6 1.8M491.3 374.8l-0.2 2.3M490.3 377.4l0.1 2.6M489.7 380.0l0.0 2.6M486.9 382.6l0.6 2.7M485.5 385.2l0.2 1.9M485.7 387.8l-0.1 2.1M486.6 390.4l-0.5 2.2M485.4 393.0l0.4 2.4M488.4 395.6l-0.1 2.3M486.5 398.2l0.5 2.5M488.7 400.8l-0.5 2.0M488.8 406.0l0.4 2.2M491.2 408.6l0.4 2.2M489.6 413.8l0.0 2.6M490.5 416.4l0.3 2.2M491.0 419.0l0.5 2.2M489.6 421.6l-0.3 2.5M489.7 426.8l0.5 2.5M486.2 429.4l0.1 3.0M491.2 195.0l-0.5 2.6M487.3 196.6l0.1 2.5M491.7 198.2l-0.4 2.3M488.4 199.8l0.3 2.5M495.1 201.4l0.5 1.7M485.9 203.0l0.3 2.3M495.2 204.6l-0.1 1.6M481.4 206.2l-0.9 2.2M484.8 207.8l-0.9 2.7M479.9 209.4l-0.3 2.5M489.3 211.0l-0.6 2.8M484.8 212.6l0.6 2.0M487.7 214.2l0.9 1.6M486.0 215.8l0.2 2.8M486.1 217.4l-0.5 1.7M485.0 219.0l-0.7 2.0M490.9 220.6l-0.6 1.8M486.0 222.2l0.0 2.7M480.5 223.8l0.5 2.0M490.9 225.4l0.8 1.8M481.3 227.0l-0.1 2.1M484.8 228.6l0.4 1.7M485.7 230.2l0.6 2.0M479.8 231.8l-0.5 2.3M477.4 233.4l-0.6 1.9M486.8 235.0l0.5 2.2M478.6 236.6l-0.3 1.6M492.4 238.2l-0.1 2.6M481.1 239.8l-0.4 1.7M483.7 241.4l0.4 2.2M483.2 243.0l-0.7 1.9M490.4 244.6l-0.6 2.8M491.9 246.2l-0.7 1.5M492.2 247.8l-0.9 2.4M488.0 249.4l-0.2 2.3M481.5 251.0l0.5 2.6M482.4 252.6l-0.4 2.6M485.3 254.2l-0.7 2.5M497.1 255.8l1.0 1.8M485.4 257.4l-1.0 1.7M488.5 259.0l0.9 2.5M486.9 260.6l-0.2 2.2M487.0 262.2l-0.9 1.7M489.2 263.8l-0.9 2.8M498.1 265.4l-0.1 2.1M493.1 267.0l0.7 2.0M497.7 268.6l0.9 1.9M493.7 270.2l0.9 1.9M498.8 271.8l0.0 2.4M488.1 273.4l-0.2 2.4M489.6 275.0l0.9 2.0M494.0 276.6l0.6 1.9M495.7 278.2l0.5 2.5M491.1 279.8l-0.3 2.3M492.6 281.4l-0.1 2.2M496.1 283.0l-0.7 1.8M488.7 284.6l0.0 1.8M497.9 286.2l-0.6 2.1M495.9 287.8l-0.4 1.6M489.8 289.4l0.4 2.0M497.7 291.0l-0.7 1.9M492.4 292.6l-0.3 1.9M487.6 294.2l0.0 2.5M490.4 295.8l1.0 2.3M490.1 297.4l-0.3 1.9M486.7 299.0l-0.1 2.2" stroke="#3e4ec0" stroke-opacity="0.85" stroke-width="1.1" fill="none"/>
<path d="M472.9 129.6l0.7 3.8M474.1 133.6l-1.6 2.0M470.3 138.5l-1.3 1.5M468.8 141.2l-1.4 1.9M467.3 144.7l-2.1 1.6M464.2 144.2l-3.5 1.7M459.2 146.2l-2.7 -0.2M456.6 145.5l-3.8 0.5M453.8 145.7l-1.8 -1.5M451.2 144.5l-3.6 -1.4M446.4 140.6l-2.4 -2.8M445.5 137.0l-1.9 -2.9M444.0 134.0l-0.4 -2.4M443.0 130.7l-0.1 -2.4M445.0 126.9l1.1 -3.1M443.3 123.6l-0.1 -3.1M443.1 119.9l2.1 -2.6M445.1 117.1l0.4 -2.0M445.3 113.1l1.9 -1.5M448.8 112.5l2.2 -2.8M451.1 111.1l3.2 -1.3M453.0 109.1l3.0 -1.8M455.2 108.0l2.2 -0.6M457.7 107.5l2.1 -0.7M460.2 106.7l2.3 -0.5M462.5 108.3l2.1 0.2M464.8 109.1l2.1 0.9M468.4 107.8l1.6 1.5M471.6 117.6l0.9 3.4M473.6 120.1l1.0 2.5M462.4 120.7l-0.6 2.9M459.0 127.9l-0.3 3.0M456.3 119.4l0.6 2.9M466.7 111.9l0.1 3.0M458.9 123.1l0.9 2.9M462.7 113.7l0.4 3.0M457.0 112.5l-1.2 2.7M453.0 129.1l-0.5 3.0" stroke="#3a48b8" stroke-opacity="0.85" stroke-width="1.5" fill="none"/>
<defs><linearGradient id="cw" x1="0" y1="0" x2="0" y2="1">
<stop offset="0" stop-color="#b40426"/><stop offset=".125" stop-color="#e0584a"/><stop offset=".25" stop-color="#f4987a"/><stop offset=".375" stop-color="#f4c4ac"/><stop offset=".5" stop-color="#dddcdc"/><stop offset=".625" stop-color="#b8d0f8"/><stop offset=".75" stop-color="#8caefc"/><stop offset=".875" stop-color="#6282ea"/><stop offset="1" stop-color="#3b4cc0"/></linearGradient></defs>
<rect x="679.3" y="119.3" width="5.7" height="128.0" fill="url(#cw)"/>
<path d="M685 119.3h2.5M685 123.6h2.5M685 127.8h2.5M685 132.1h2.5M685 136.4h2.5M685 140.6h2.5M685 144.9h2.5M685 149.2h2.5M685 153.4h2.5M685 157.7h2.5M685 162.0h2.5M685 166.2h2.5M685 170.5h2.5M685 174.8h2.5M685 179.0h2.5M685 183.3h2.5M685 187.6h2.5M685 191.8h2.5M685 196.1h2.5M685 200.4h2.5M685 204.6h2.5M685 208.9h2.5M685 213.2h2.5M685 217.4h2.5M685 221.7h2.5M685 226.0h2.5M685 230.2h2.5M685 234.5h2.5M685 238.8h2.5M685 243.0h2.5M685 247.3h2.5" stroke="#b8bac8" stroke-width="0.7" fill="none"/>
<rect x="679.3" y="290" width="5.7" height="128" fill="url(#cw)"/>
<path d="M685 290.0h2.5M685 294.3h2.5M685 298.5h2.5M685 302.8h2.5M685 307.1h2.5M685 311.3h2.5M685 315.6h2.5M685 319.9h2.5M685 324.1h2.5M685 328.4h2.5M685 332.7h2.5M685 336.9h2.5M685 341.2h2.5M685 345.5h2.5M685 349.7h2.5M685 354.0h2.5M685 358.3h2.5M685 362.5h2.5M685 366.8h2.5M685 371.1h2.5M685 375.3h2.5M685 379.6h2.5M685 383.9h2.5M685 388.1h2.5M685 392.4h2.5M685 396.7h2.5M685 400.9h2.5M685 405.2h2.5M685 409.5h2.5M685 413.7h2.5M685 418.0h2.5" stroke="#b8bac8" stroke-width="0.7" fill="none"/>
<text x="680.5" y="118.7" textLength="30" lengthAdjust="spacingAndGlyphs" font-family="Liberation Sans" font-size="14" fill="#ffffff" >1900</text>
<text x="689.8" y="148" textLength="30" lengthAdjust="spacingAndGlyphs" font-family="Liberation Sans" font-size="14" fill="#ffffff" >1600</text>
<text x="689.8" y="178.7" textLength="30" lengthAdjust="spacingAndGlyphs" font-family="Liberation Sans" font-size="14" fill="#ffffff" >1200</text>
<text x="688.2" y="208.7" textLength="24" lengthAdjust="spacingAndGlyphs" font-family="Liberation Sans" font-size="14" fill="#ffffff" >800</text>
<text x="688.2" y="239" textLength="24" lengthAdjust="spacingAndGlyphs" font-family="Liberation Sans" font-size="14" fill="#ffffff" >400</text>
<text x="678.8" y="261.3" textLength="24.2" lengthAdjust="spacingAndGlyphs" font-family="Liberation Sans" font-size="14" fill="#ffffff" >200</text>
<text x="678" y="290.7" textLength="28.5" lengthAdjust="spacingAndGlyphs" font-family="Liberation Sans" font-size="14" fill="#ffffff" >0.25</text>
<text x="688" y="323" textLength="28.5" lengthAdjust="spacingAndGlyphs" font-family="Liberation Sans" font-size="14" fill="#ffffff" >0.20</text>
<text x="688" y="374.3" textLength="28.5" lengthAdjust="spacingAndGlyphs" font-family="Liberation Sans" font-size="14" fill="#ffffff" >0.10</text>
<text x="678" y="432" textLength="29.5" lengthAdjust="spacingAndGlyphs" font-family="Liberation Sans" font-size="14" fill="#ffffff" >0.00</text>
<text x="710" y="102.7" font-family="Liberation Sans" font-weight="bold" font-style="italic" font-size="13" fill="#fff">T</text>
<text x="701.5" y="274" textLength="20.5" lengthAdjust="spacingAndGlyphs" font-family="Liberation Sans" font-weight="bold" font-style="italic" font-size="13.5" fill="#fff">O2</text>
<path d="M279.2 390.5 V370.5" stroke="#e8e070" stroke-width="1.6"/><path d="M276.8 371.5 l2.4 -4 l2.4 4z" fill="#f0e040"/>
<path d="M281 390.3 H298" stroke="#9a4a62" stroke-width="1.6"/><path d="M297.5 388 l4 2.3 l-4 2.3z" fill="#d02020"/>
<circle cx="279.3" cy="390.3" r="1.5" fill="#107010"/>
<text x="280" y="371.8" font-family="Liberation Sans" font-size="7.5" fill="#f0f0f0">Y</text>
<text x="281" y="391" font-family="Liberation Sans" font-size="7.5" fill="#f0f0f0">Z</text>
<text x="299.5" y="391" font-family="Liberation Sans" font-size="7.5" fill="#f0f0f0">X</text>
</svg>
<!-- end render -->
<!-- status bar -->
<div class="btn" style="left:367px;top:437px;width:15px;height:13px;background:#f0f0f0"></div>
<svg class="a" style="left:367px;top:437px" width="15" height="13"><path d="M5 4.5 l5 5 M10 4.5 l-5 5" stroke="#888" stroke-width="1.3"/></svg>
<div class="a" style="left:381px;top:436px;width:353px;height:14px;border:1px solid #b0b0b0;border-radius:2px;background:#f0f0f0"></div>
<svg class="a" style="left:738px;top:442px" width="12" height="12"><path d="M2 11 l9 -9 M5 11 l6 -6 M8 11 l3 -3" stroke="#999" stroke-width="1"/></svg>

<div class="a" style="left:1px;top:453px;width:748px;height:1px;background:#a0a0a0"></div>
</body></html>
